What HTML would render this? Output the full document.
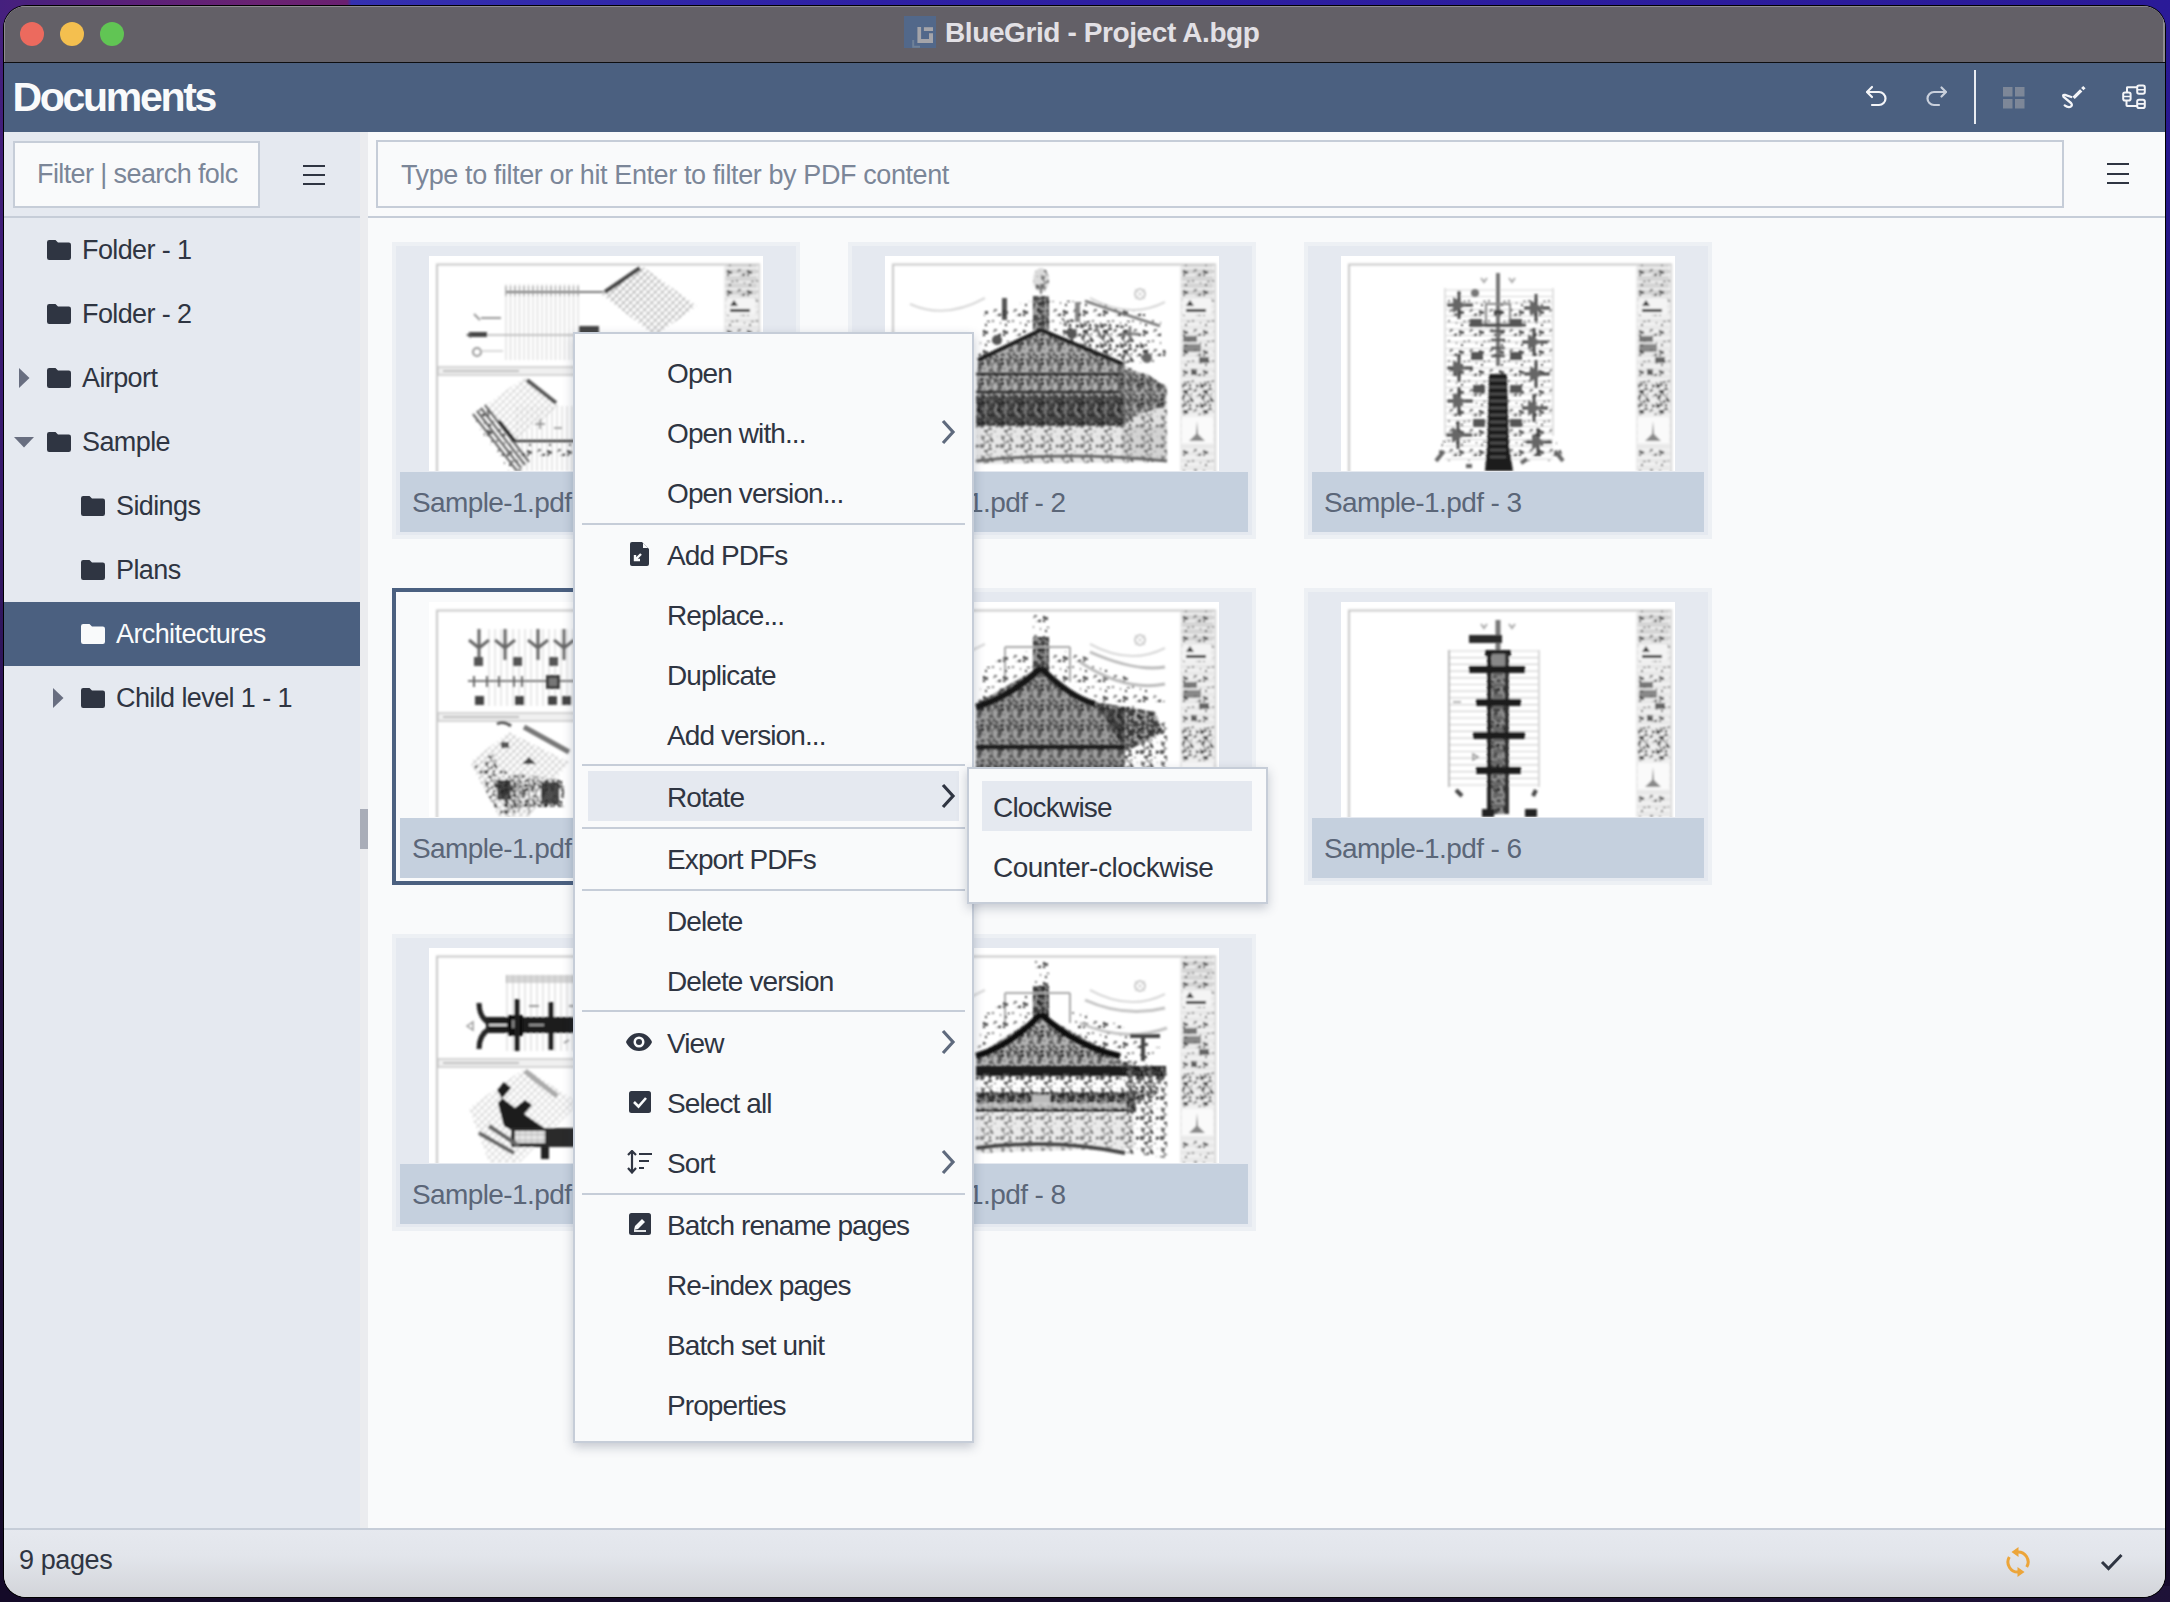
<!DOCTYPE html>
<html><head><meta charset="utf-8"><style>
*{box-sizing:border-box;margin:0;padding:0}
html,body{width:2170px;height:1602px;overflow:hidden}
body{font-family:"Liberation Sans",sans-serif;position:relative;background:#140a26}
.a{position:absolute}
.t{position:absolute;white-space:nowrap;line-height:1;color:#2f3542}
#win{position:absolute;left:0;top:0;width:2170px;height:1602px;clip-path:inset(6px 5px 5px 4px round 22px);background:#f9fafb}
.tl{position:absolute;top:22px;width:24px;height:24px;border-radius:50%}
</style></head><body>
<div class="a" style="left:0;top:0;width:2170px;height:40px;background:linear-gradient(90deg,#45207e 0%,#5a2078 6%,#6a2272 12%,#6a2070 16%,#3430b0 16.2%,#2e20a4 40%,#2a1a98 100%)"></div>
<div class="a" style="left:0;top:30px;width:8px;height:1572px;background:linear-gradient(180deg,#45207e 0%,#3a1a70 25%,#22103e 60%,#140a28 100%)"></div>
<div class="a" style="left:2158px;top:30px;width:12px;height:1572px;background:linear-gradient(180deg,#2a1a98 0%,#221270 30%,#1a0c40 70%,#160a2c 100%)"></div>
<div class="a" style="left:0;top:1586px;width:2170px;height:16px;background:linear-gradient(90deg,#140a28 0%,#140a28 60%,#1e1238 100%)"></div>
<div class="a" style="left:3px;top:5px;width:2163px;height:1593px;border-radius:23px;background:#000"></div>
<div id="win">
<div class="a" style="left:4px;top:6px;width:2161px;height:56px;background:#636067;border-top:1px solid #8d8b90;border-right:2px solid #8d8b90;border-left:1px solid #8d8b90"></div>
<div class="a" style="left:4px;top:62px;width:2161px;height:1px;background:#0e0e10"></div>
<div class="tl" style="left:20px;background:#ec6a5e"></div>
<div class="tl" style="left:60px;background:#f4bf4f"></div>
<div class="tl" style="left:100px;background:#61c554"></div>
<svg class="a" style="left:904px;top:16px" width="32" height="32" viewBox="0 0 32 32"><rect width="32" height="32" fill="#52688a"/><path d="M13.4 11.1 H17.1 V22.9 H25 V17.2 H29 V26.9 H13.4Z" fill="#a4a4a9"/><rect x="19.9" y="11.2" width="9.1" height="3.8" fill="#a4a4a9"/><path d="M9.2 24 V30.8 H16" stroke="#6f8198" stroke-width="2" fill="none"/></svg>
<div class="t" style="left:945px;top:18.80px;font-size:28px;color:#e2e0e5;font-weight:bold;letter-spacing:-0.4px;">BlueGrid - Project A.bgp</div>
<div class="a" style="left:4px;top:63px;width:2161px;height:69px;background:#4b6080"></div>
<div class="t" style="left:12.5px;top:77.29px;font-size:41px;color:#f9fafb;font-weight:bold;letter-spacing:-2.3px;">Documents</div>
<svg class="a" style="left:1860px;top:80px" width="34" height="34" viewBox="0 0 34 34"><path d="M12 7 L7 12 L12 17" stroke="#f4f5f8" stroke-width="2.2" fill="none" stroke-linecap="round" stroke-linejoin="round"/><path d="M7.5 12 H19 a6.5 6.5 0 0 1 0 13 H12" stroke="#f4f5f8" stroke-width="2.2" fill="none" stroke-linecap="round"/></svg>
<svg class="a" style="left:1919px;top:80px" width="34" height="34" viewBox="0 0 34 34"><path d="M22.5 7.5 L27 12 L22.5 16.5" stroke="#c9d0dc" stroke-width="2.2" fill="none" stroke-linecap="round" stroke-linejoin="round"/><path d="M26.5 12 H15 a6.5 6.5 0 0 0 0 13 H20" stroke="#c9d0dc" stroke-width="2.2" fill="none" stroke-linecap="round"/></svg>
<div class="a" style="left:1974px;top:70px;width:2px;height:54px;background:#e9ecf1"></div>
<svg class="a" style="left:2003px;top:87px" width="22" height="22" viewBox="0 0 22 22"><rect x="0" y="0" width="9.5" height="9.5" fill="#7d8798"/><rect x="12" y="0" width="9.5" height="9.5" fill="#7d8798"/><rect x="0" y="12" width="9.5" height="9.5" fill="#7d8798"/><rect x="12" y="12" width="9.5" height="9.5" fill="#7d8798"/></svg>
<svg class="a" style="left:2060px;top:84px" width="28" height="28" viewBox="0 0 28 28" fill="none" stroke="#f4f5f8"><path d="M13.6 13.9 L21.2 6.3" stroke-width="3.3"/><path d="M22.3 5.2 L24.4 3.1" stroke-width="3.3"/><path d="M11.3 13 L5 10.9 Q2.2 10.3 3.6 12.9 L11 19 Q13.2 21.6 10 23 Q7.5 23.6 4.7 21.4" stroke-width="2.3" stroke-linecap="round" stroke-linejoin="round"/></svg>
<svg class="a" style="left:2120px;top:83px" width="28" height="28" viewBox="0 0 28 28" fill="none" stroke="#f4f5f8" stroke-width="2"><rect x="3.2" y="9.5" width="7.4" height="8.1" rx="1.8"/><rect x="17.2" y="2.6" width="7.6" height="8.2" rx="1.8"/><rect x="17.2" y="16.8" width="7.6" height="8.2" rx="1.8"/><path d="M3.2 13.55 H10.6 M17.2 6.7 H24.8 M17.2 20.9 H24.8" stroke-width="1.6"/><path d="M7 9.5 V4.6 Q7 4.2 7.6 4.2 H17.2 M6.5 17.6 V22.3 Q6.5 22.9 7.2 22.9 H17.2"/></svg>
<div class="a" style="left:4px;top:132px;width:356px;height:1396px;background:#e5e9f0"></div>
<div class="a" style="left:360px;top:132px;width:8px;height:1396px;background:#ebecef"></div>
<div class="a" style="left:360px;top:809px;width:8px;height:40px;background:#a9adb8"></div>
<div class="a" style="left:13px;top:141px;width:247px;height:67px;background:#f9fafb;border:2px solid #c6cdd8"></div>
<div class="t" style="left:37px;top:161.14px;font-size:27px;color:#7b8698;letter-spacing:-0.6px;">Filter | search folc</div>
<div class="a" style="left:303px;top:165px;width:22px;height:2.4px;background:#2f3542"></div>
<div class="a" style="left:303px;top:174px;width:22px;height:2.4px;background:#2f3542"></div>
<div class="a" style="left:303px;top:183px;width:22px;height:2.4px;background:#2f3542"></div>
<div class="a" style="left:4px;top:216px;width:356px;height:2px;background:#c6cdd8"></div>
<div class="a" style="left:376px;top:140px;width:1688px;height:68px;background:#f9fafb;border:2px solid #c6cdd8"></div>
<div class="t" style="left:401px;top:162.14px;font-size:27px;color:#7b8698;letter-spacing:-0.4px;">Type to filter or hit Enter to filter by PDF content</div>
<div class="a" style="left:2107px;top:163px;width:22px;height:2.4px;background:#2f3542"></div>
<div class="a" style="left:2107px;top:172.5px;width:22px;height:2.4px;background:#2f3542"></div>
<div class="a" style="left:2107px;top:182px;width:22px;height:2.4px;background:#2f3542"></div>
<div class="a" style="left:368px;top:216px;width:1797px;height:2px;background:#c6cdd8"></div>
<div class="a" style="left:4px;top:602px;width:356px;height:64px;background:#4b6080"></div>
<svg class="a" style="left:47px;top:240px" width="24" height="20" viewBox="0 0 24 20"><path d="M0 2.2 Q0 0 2.2 0 H8.5 L11 2.5 H21.8 Q24 2.5 24 4.7 V17.8 Q24 20 21.8 20 H2.2 Q0 20 0 17.8Z" fill="#2f3542"/></svg>
<div class="t" style="left:82px;top:237.14px;font-size:27px;color:#2f3542;letter-spacing:-0.6px;">Folder - 1</div>
<svg class="a" style="left:47px;top:304px" width="24" height="20" viewBox="0 0 24 20"><path d="M0 2.2 Q0 0 2.2 0 H8.5 L11 2.5 H21.8 Q24 2.5 24 4.7 V17.8 Q24 20 21.8 20 H2.2 Q0 20 0 17.8Z" fill="#2f3542"/></svg>
<div class="t" style="left:82px;top:301.14px;font-size:27px;color:#2f3542;letter-spacing:-0.6px;">Folder - 2</div>
<svg class="a" style="left:47px;top:368px" width="24" height="20" viewBox="0 0 24 20"><path d="M0 2.2 Q0 0 2.2 0 H8.5 L11 2.5 H21.8 Q24 2.5 24 4.7 V17.8 Q24 20 21.8 20 H2.2 Q0 20 0 17.8Z" fill="#2f3542"/></svg>
<div class="t" style="left:82px;top:365.14px;font-size:27px;color:#2f3542;letter-spacing:-0.6px;">Airport</div>
<svg class="a" style="left:19px;top:368px" width="11" height="20" viewBox="0 0 11 20"><path d="M0 0 L10.5 10 L0 20Z" fill="#686e80"/></svg>
<svg class="a" style="left:47px;top:432px" width="24" height="20" viewBox="0 0 24 20"><path d="M0 2.2 Q0 0 2.2 0 H8.5 L11 2.5 H21.8 Q24 2.5 24 4.7 V17.8 Q24 20 21.8 20 H2.2 Q0 20 0 17.8Z" fill="#2f3542"/></svg>
<div class="t" style="left:82px;top:429.14px;font-size:27px;color:#2f3542;letter-spacing:-0.6px;">Sample</div>
<svg class="a" style="left:14px;top:437px" width="20" height="11" viewBox="0 0 20 11"><path d="M0 0 H20 L10 10.5Z" fill="#686e80"/></svg>
<svg class="a" style="left:81px;top:496px" width="24" height="20" viewBox="0 0 24 20"><path d="M0 2.2 Q0 0 2.2 0 H8.5 L11 2.5 H21.8 Q24 2.5 24 4.7 V17.8 Q24 20 21.8 20 H2.2 Q0 20 0 17.8Z" fill="#2f3542"/></svg>
<div class="t" style="left:116px;top:493.14px;font-size:27px;color:#2f3542;letter-spacing:-0.6px;">Sidings</div>
<svg class="a" style="left:81px;top:560px" width="24" height="20" viewBox="0 0 24 20"><path d="M0 2.2 Q0 0 2.2 0 H8.5 L11 2.5 H21.8 Q24 2.5 24 4.7 V17.8 Q24 20 21.8 20 H2.2 Q0 20 0 17.8Z" fill="#2f3542"/></svg>
<div class="t" style="left:116px;top:557.14px;font-size:27px;color:#2f3542;letter-spacing:-0.6px;">Plans</div>
<svg class="a" style="left:81px;top:624px" width="24" height="20" viewBox="0 0 24 20"><path d="M0 2.2 Q0 0 2.2 0 H8.5 L11 2.5 H21.8 Q24 2.5 24 4.7 V17.8 Q24 20 21.8 20 H2.2 Q0 20 0 17.8Z" fill="#f9fafb"/></svg>
<div class="t" style="left:116px;top:621.14px;font-size:27px;color:#f9fafb;letter-spacing:-0.6px;">Architectures</div>
<svg class="a" style="left:81px;top:688px" width="24" height="20" viewBox="0 0 24 20"><path d="M0 2.2 Q0 0 2.2 0 H8.5 L11 2.5 H21.8 Q24 2.5 24 4.7 V17.8 Q24 20 21.8 20 H2.2 Q0 20 0 17.8Z" fill="#2f3542"/></svg>
<div class="t" style="left:116px;top:685.14px;font-size:27px;color:#2f3542;letter-spacing:-0.6px;">Child level 1 - 1</div>
<svg class="a" style="left:53px;top:688px" width="11" height="20" viewBox="0 0 11 20"><path d="M0 0 L10.5 10 L0 20Z" fill="#686e80"/></svg>
<svg width="0" height="0" style="position:absolute"><defs><pattern id="n1" width="20" height="20" patternUnits="userSpaceOnUse"><rect x="11" y="19" width="1" height="3" fill="#777"/><rect x="0" y="15" width="3" height="3" fill="#555"/><rect x="15" y="17" width="1" height="3" fill="#777"/><rect x="7" y="4" width="2" height="2" fill="#777"/><rect x="2" y="5" width="3" height="1" fill="#1e1e1e"/><rect x="8" y="15" width="2" height="1" fill="#777"/><rect x="18" y="14" width="2" height="3" fill="#333"/><rect x="15" y="6" width="1" height="2" fill="#555"/><rect x="9" y="13" width="3" height="2" fill="#777"/><rect x="13" y="18" width="3" height="2" fill="#333"/><rect x="0" y="8" width="2" height="2" fill="#333"/><rect x="18" y="18" width="3" height="2" fill="#1e1e1e"/></pattern><pattern id="n2" width="20" height="20" patternUnits="userSpaceOnUse"><rect x="16" y="0" width="3" height="3" fill="#777"/><rect x="5" y="3" width="2" height="2" fill="#555"/><rect x="3" y="18" width="1" height="4" fill="#333"/><rect x="8" y="5" width="1" height="1" fill="#777"/><rect x="19" y="14" width="1" height="2" fill="#333"/><rect x="0" y="6" width="2" height="1" fill="#333"/><rect x="6" y="17" width="1" height="2" fill="#333"/><rect x="12" y="9" width="2" height="2" fill="#1e1e1e"/><rect x="4" y="8" width="2" height="3" fill="#1e1e1e"/><rect x="18" y="0" width="3" height="2" fill="#555"/><rect x="9" y="15" width="2" height="1" fill="#555"/><rect x="5" y="1" width="2" height="2" fill="#555"/><rect x="12" y="0" width="1" height="1" fill="#777"/><rect x="0" y="14" width="3" height="2" fill="#1e1e1e"/><rect x="6" y="3" width="2" height="3" fill="#333"/><rect x="16" y="8" width="4" height="2" fill="#777"/><rect x="11" y="9" width="1" height="3" fill="#1e1e1e"/><rect x="16" y="19" width="1" height="4" fill="#555"/><rect x="17" y="2" width="2" height="2" fill="#555"/><rect x="2" y="4" width="2" height="3" fill="#555"/><rect x="2" y="19" width="4" height="1" fill="#777"/><rect x="11" y="8" width="1" height="1" fill="#777"/><rect x="1" y="15" width="1" height="4" fill="#555"/><rect x="18" y="4" width="2" height="1" fill="#777"/><rect x="4" y="1" width="1" height="1" fill="#777"/><rect x="19" y="5" width="1" height="3" fill="#777"/><rect x="15" y="8" width="4" height="4" fill="#555"/><rect x="3" y="12" width="4" height="2" fill="#333"/><rect x="15" y="8" width="2" height="4" fill="#555"/></pattern><pattern id="n3" width="20" height="20" patternUnits="userSpaceOnUse"><rect x="1" y="2" width="1" height="3" fill="#1e1e1e"/><rect x="16" y="6" width="3" height="3" fill="#1e1e1e"/><rect x="7" y="2" width="2" height="1" fill="#777"/><rect x="7" y="18" width="3" height="1" fill="#1e1e1e"/><rect x="1" y="17" width="4" height="1" fill="#333"/><rect x="3" y="18" width="2" height="3" fill="#555"/><rect x="6" y="11" width="2" height="1" fill="#1e1e1e"/><rect x="6" y="15" width="3" height="1" fill="#777"/><rect x="14" y="11" width="3" height="2" fill="#555"/><rect x="7" y="2" width="2" height="1" fill="#555"/><rect x="9" y="19" width="4" height="2" fill="#1e1e1e"/><rect x="10" y="4" width="3" height="1" fill="#777"/><rect x="2" y="17" width="4" height="1" fill="#555"/><rect x="15" y="18" width="3" height="3" fill="#777"/><rect x="15" y="2" width="1" height="1" fill="#1e1e1e"/><rect x="14" y="9" width="3" height="3" fill="#777"/><rect x="11" y="5" width="3" height="1" fill="#1e1e1e"/><rect x="9" y="4" width="1" height="4" fill="#333"/><rect x="15" y="2" width="4" height="2" fill="#333"/><rect x="4" y="13" width="4" height="2" fill="#555"/><rect x="12" y="7" width="4" height="2" fill="#333"/><rect x="7" y="0" width="1" height="1" fill="#777"/><rect x="4" y="13" width="2" height="2" fill="#555"/><rect x="16" y="19" width="3" height="1" fill="#1e1e1e"/><rect x="12" y="12" width="4" height="4" fill="#777"/><rect x="12" y="1" width="1" height="4" fill="#333"/><rect x="3" y="10" width="1" height="1" fill="#1e1e1e"/><rect x="17" y="3" width="1" height="1" fill="#555"/><rect x="19" y="12" width="1" height="1" fill="#333"/><rect x="15" y="3" width="3" height="2" fill="#1e1e1e"/><rect x="9" y="2" width="2" height="4" fill="#333"/><rect x="8" y="15" width="1" height="1" fill="#333"/><rect x="16" y="11" width="1" height="1" fill="#333"/><rect x="2" y="8" width="3" height="1" fill="#555"/><rect x="17" y="17" width="2" height="2" fill="#555"/><rect x="6" y="7" width="2" height="3" fill="#777"/><rect x="11" y="0" width="2" height="1" fill="#1e1e1e"/><rect x="19" y="11" width="2" height="3" fill="#777"/><rect x="3" y="7" width="2" height="3" fill="#777"/><rect x="19" y="19" width="2" height="2" fill="#1e1e1e"/><rect x="2" y="3" width="4" height="4" fill="#777"/><rect x="13" y="10" width="2" height="2" fill="#1e1e1e"/><rect x="2" y="5" width="2" height="4" fill="#333"/><rect x="14" y="4" width="1" height="2" fill="#777"/><rect x="4" y="0" width="3" height="1" fill="#1e1e1e"/><rect x="4" y="13" width="1" height="3" fill="#333"/><rect x="9" y="16" width="1" height="2" fill="#333"/><rect x="4" y="1" width="3" height="2" fill="#555"/></pattern><pattern id="n4" width="20" height="20" patternUnits="userSpaceOnUse"><rect x="14" y="14" width="4" height="3" fill="#333"/><rect x="19" y="5" width="3" height="2" fill="#1e1e1e"/><rect x="17" y="1" width="2" height="4" fill="#777"/><rect x="5" y="19" width="4" height="4" fill="#1e1e1e"/><rect x="6" y="7" width="1" height="5" fill="#1e1e1e"/><rect x="6" y="16" width="2" height="4" fill="#333"/><rect x="2" y="14" width="2" height="3" fill="#555"/><rect x="2" y="8" width="4" height="3" fill="#555"/><rect x="2" y="18" width="3" height="2" fill="#1e1e1e"/><rect x="12" y="2" width="4" height="1" fill="#1e1e1e"/><rect x="1" y="15" width="1" height="1" fill="#777"/><rect x="6" y="8" width="2" height="4" fill="#555"/><rect x="13" y="3" width="2" height="1" fill="#333"/><rect x="1" y="14" width="2" height="2" fill="#777"/><rect x="14" y="16" width="2" height="2" fill="#333"/><rect x="3" y="12" width="2" height="2" fill="#777"/><rect x="18" y="9" width="1" height="2" fill="#1e1e1e"/><rect x="19" y="18" width="1" height="2" fill="#1e1e1e"/><rect x="8" y="0" width="1" height="1" fill="#555"/><rect x="2" y="6" width="2" height="3" fill="#333"/><rect x="19" y="14" width="3" height="1" fill="#333"/><rect x="4" y="12" width="5" height="2" fill="#333"/><rect x="19" y="7" width="2" height="2" fill="#333"/><rect x="17" y="6" width="2" height="2" fill="#777"/><rect x="1" y="3" width="3" height="4" fill="#1e1e1e"/><rect x="7" y="12" width="1" height="3" fill="#555"/><rect x="16" y="5" width="3" height="4" fill="#1e1e1e"/><rect x="19" y="19" width="1" height="2" fill="#1e1e1e"/><rect x="6" y="0" width="3" height="1" fill="#1e1e1e"/><rect x="1" y="1" width="2" height="3" fill="#333"/><rect x="4" y="2" width="3" height="2" fill="#555"/><rect x="16" y="18" width="2" height="2" fill="#333"/><rect x="15" y="11" width="5" height="1" fill="#555"/><rect x="2" y="15" width="1" height="1" fill="#1e1e1e"/><rect x="2" y="2" width="2" height="3" fill="#777"/><rect x="4" y="10" width="5" height="2" fill="#555"/><rect x="2" y="13" width="1" height="1" fill="#1e1e1e"/><rect x="12" y="12" width="3" height="4" fill="#1e1e1e"/><rect x="3" y="8" width="1" height="5" fill="#777"/><rect x="18" y="14" width="3" height="2" fill="#777"/><rect x="16" y="0" width="3" height="4" fill="#555"/><rect x="7" y="3" width="1" height="5" fill="#777"/><rect x="8" y="0" width="5" height="5" fill="#555"/><rect x="6" y="16" width="3" height="1" fill="#333"/><rect x="15" y="7" width="3" height="3" fill="#555"/><rect x="13" y="6" width="4" height="4" fill="#333"/><rect x="10" y="6" width="4" height="1" fill="#333"/><rect x="1" y="2" width="2" height="2" fill="#555"/><rect x="8" y="6" width="1" height="2" fill="#777"/><rect x="10" y="19" width="4" height="4" fill="#777"/><rect x="8" y="19" width="3" height="1" fill="#1e1e1e"/><rect x="18" y="0" width="3" height="3" fill="#333"/><rect x="8" y="7" width="2" height="4" fill="#333"/><rect x="3" y="17" width="1" height="1" fill="#555"/><rect x="15" y="8" width="1" height="1" fill="#333"/></pattern><pattern id="hatch" width="5" height="5" patternUnits="userSpaceOnUse" patternTransform="rotate(45)"><rect width="5" height="5" fill="#fff"/><line x1="0" y1="0" x2="0" y2="5" stroke="#8a8a8a" stroke-width="1.6"/><line x1="0" y1="0" x2="5" y2="0" stroke="#9a9a9a" stroke-width="1.2"/></pattern><pattern id="hatchd" width="5" height="5" patternUnits="userSpaceOnUse" patternTransform="rotate(45)"><rect width="5" height="5" fill="#9a9a9a"/><line x1="0" y1="0" x2="0" y2="5" stroke="#3a3a3a" stroke-width="2"/><line x1="0" y1="0" x2="5" y2="0" stroke="#444" stroke-width="2"/></pattern><pattern id="grid" width="6" height="6" patternUnits="userSpaceOnUse"><rect width="6" height="6" fill="#8a8a8a"/><line x1="0" y1="0" x2="6" y2="0" stroke="#2e2e2e" stroke-width="2"/><line x1="0" y1="0" x2="0" y2="6" stroke="#555" stroke-width="1.5"/></pattern><pattern id="gridl" width="6" height="6" patternUnits="userSpaceOnUse"><rect width="6" height="6" fill="#e4e4e4"/><line x1="0" y1="0" x2="6" y2="0" stroke="#999" stroke-width="1.4"/><line x1="0" y1="0" x2="0" y2="6" stroke="#aaa" stroke-width="1"/></pattern><filter id="bl" x="-2%" y="-2%" width="104%" height="104%"><feGaussianBlur stdDeviation="0.85"/></filter><symbol id="thA1" viewBox="0 0 334 215"><g filter="url(#bl)"><rect x="8" y="8.5" width="322" height="215" fill="none" stroke="#c9c9c9" stroke-width="2"/><rect x="295" y="9" width="35" height="206" fill="#e9e9e9"/><rect x="297" y="9" width="31" height="36" fill="#d0d0d0" opacity=".8"/><line x1="296" y1="12" x2="329" y2="12" stroke="#f7f7f7" stroke-width="1.5"/><line x1="296" y1="19" x2="329" y2="19" stroke="#f7f7f7" stroke-width="1.5"/><line x1="296" y1="26" x2="329" y2="26" stroke="#f7f7f7" stroke-width="1.5"/><line x1="296" y1="33" x2="329" y2="33" stroke="#f7f7f7" stroke-width="1.5"/><line x1="296" y1="40" x2="329" y2="40" stroke="#f7f7f7" stroke-width="1.5"/><line x1="296" y1="47" x2="329" y2="47" stroke="#f7f7f7" stroke-width="1.5"/><line x1="296" y1="54" x2="329" y2="54" stroke="#f7f7f7" stroke-width="1.5"/><line x1="296" y1="61" x2="329" y2="61" stroke="#f7f7f7" stroke-width="1.5"/><line x1="296" y1="68" x2="329" y2="68" stroke="#f7f7f7" stroke-width="1.5"/><line x1="296" y1="75" x2="329" y2="75" stroke="#f7f7f7" stroke-width="1.5"/><line x1="296" y1="82" x2="329" y2="82" stroke="#f7f7f7" stroke-width="1.5"/><line x1="296" y1="89" x2="329" y2="89" stroke="#f7f7f7" stroke-width="1.5"/><line x1="296" y1="96" x2="329" y2="96" stroke="#f7f7f7" stroke-width="1.5"/><line x1="296" y1="103" x2="329" y2="103" stroke="#f7f7f7" stroke-width="1.5"/><line x1="296" y1="110" x2="329" y2="110" stroke="#f7f7f7" stroke-width="1.5"/><line x1="296" y1="117" x2="329" y2="117" stroke="#f7f7f7" stroke-width="1.5"/><line x1="296" y1="124" x2="329" y2="124" stroke="#f7f7f7" stroke-width="1.5"/><line x1="296" y1="131" x2="329" y2="131" stroke="#f7f7f7" stroke-width="1.5"/><line x1="296" y1="138" x2="329" y2="138" stroke="#f7f7f7" stroke-width="1.5"/><line x1="296" y1="145" x2="329" y2="145" stroke="#f7f7f7" stroke-width="1.5"/><line x1="296" y1="152" x2="329" y2="152" stroke="#f7f7f7" stroke-width="1.5"/><line x1="296" y1="159" x2="329" y2="159" stroke="#f7f7f7" stroke-width="1.5"/><line x1="296" y1="166" x2="329" y2="166" stroke="#f7f7f7" stroke-width="1.5"/><line x1="296" y1="173" x2="329" y2="173" stroke="#f7f7f7" stroke-width="1.5"/><line x1="296" y1="180" x2="329" y2="180" stroke="#f7f7f7" stroke-width="1.5"/><line x1="296" y1="187" x2="329" y2="187" stroke="#f7f7f7" stroke-width="1.5"/><line x1="296" y1="194" x2="329" y2="194" stroke="#f7f7f7" stroke-width="1.5"/><line x1="296" y1="201" x2="329" y2="201" stroke="#f7f7f7" stroke-width="1.5"/><line x1="296" y1="208" x2="329" y2="208" stroke="#f7f7f7" stroke-width="1.5"/><rect x="298" y="80" width="14" height="6" fill="#777"/><rect x="298" y="88" width="18" height="8" fill="#888"/><rect x="314" y="101" width="10" height="6" fill="#666"/><rect x="306" y="113" width="6" height="6" fill="#555"/><rect x="296" y="9" width="33" height="150" fill="url(#n1)"/><rect x="297" y="125" width="31" height="30" fill="url(#n2)"/><rect x="297" y="161" width="31" height="26" fill="#fafafa"/><path d="M304 185 L311 178 L312 165 L313 178 L320 185Z" fill="#888"/><rect x="297" y="190" width="31" height="25" fill="url(#n1)"/><rect x="298" y="42" width="28" height="17" fill="#f4f4f4"/><path d="M301 50 L305 44 L309 50Z" fill="#333"/><rect x="301" y="53" width="20" height="3" fill="#1e1e1e"/><rect x="9" y="111" width="320" height="8" fill="#f0f0f0" stroke="#c8c8c8" stroke-width="1.5"/><line x1="14" y1="115" x2="90" y2="115" stroke="#bbb" stroke-width="2"/><line x1="77" y1="28" x2="77" y2="104" stroke="#d0d0d0" stroke-width="1"/><line x1="81.5" y1="28" x2="81.5" y2="104" stroke="#d0d0d0" stroke-width="1"/><line x1="86.0" y1="28" x2="86.0" y2="104" stroke="#d0d0d0" stroke-width="1"/><line x1="90.5" y1="28" x2="90.5" y2="104" stroke="#d0d0d0" stroke-width="1"/><line x1="95.0" y1="28" x2="95.0" y2="104" stroke="#d0d0d0" stroke-width="1"/><line x1="99.5" y1="28" x2="99.5" y2="104" stroke="#d0d0d0" stroke-width="1"/><line x1="104.0" y1="28" x2="104.0" y2="104" stroke="#d0d0d0" stroke-width="1"/><line x1="108.5" y1="28" x2="108.5" y2="104" stroke="#d0d0d0" stroke-width="1"/><line x1="113.0" y1="28" x2="113.0" y2="104" stroke="#d0d0d0" stroke-width="1"/><line x1="117.5" y1="28" x2="117.5" y2="104" stroke="#d0d0d0" stroke-width="1"/><line x1="122.0" y1="28" x2="122.0" y2="104" stroke="#d0d0d0" stroke-width="1"/><line x1="126.5" y1="28" x2="126.5" y2="104" stroke="#d0d0d0" stroke-width="1"/><line x1="131.0" y1="28" x2="131.0" y2="104" stroke="#d0d0d0" stroke-width="1"/><line x1="135.5" y1="28" x2="135.5" y2="104" stroke="#d0d0d0" stroke-width="1"/><line x1="140.0" y1="28" x2="140.0" y2="104" stroke="#d0d0d0" stroke-width="1"/><line x1="144.5" y1="28" x2="144.5" y2="104" stroke="#d0d0d0" stroke-width="1"/><line x1="149.0" y1="28" x2="149.0" y2="104" stroke="#d0d0d0" stroke-width="1"/><line x1="77" y1="36" x2="185" y2="36" stroke="#777" stroke-width="2"/><line x1="77" y1="30" x2="77" y2="40" stroke="#999" stroke-width="1.2"/><line x1="81.5" y1="30" x2="81.5" y2="40" stroke="#999" stroke-width="1.2"/><line x1="86.0" y1="30" x2="86.0" y2="40" stroke="#999" stroke-width="1.2"/><line x1="90.5" y1="30" x2="90.5" y2="40" stroke="#999" stroke-width="1.2"/><line x1="95.0" y1="30" x2="95.0" y2="40" stroke="#999" stroke-width="1.2"/><line x1="99.5" y1="30" x2="99.5" y2="40" stroke="#999" stroke-width="1.2"/><line x1="104.0" y1="30" x2="104.0" y2="40" stroke="#999" stroke-width="1.2"/><line x1="108.5" y1="30" x2="108.5" y2="40" stroke="#999" stroke-width="1.2"/><line x1="113.0" y1="30" x2="113.0" y2="40" stroke="#999" stroke-width="1.2"/><line x1="117.5" y1="30" x2="117.5" y2="40" stroke="#999" stroke-width="1.2"/><line x1="122.0" y1="30" x2="122.0" y2="40" stroke="#999" stroke-width="1.2"/><line x1="126.5" y1="30" x2="126.5" y2="40" stroke="#999" stroke-width="1.2"/><line x1="131.0" y1="30" x2="131.0" y2="40" stroke="#999" stroke-width="1.2"/><line x1="135.5" y1="30" x2="135.5" y2="40" stroke="#999" stroke-width="1.2"/><line x1="140.0" y1="30" x2="140.0" y2="40" stroke="#999" stroke-width="1.2"/><line x1="144.5" y1="30" x2="144.5" y2="40" stroke="#999" stroke-width="1.2"/><line x1="149.0" y1="30" x2="149.0" y2="40" stroke="#999" stroke-width="1.2"/><polygon points="172,38 213,10 268,50 226,80" fill="url(#hatch)"/><line x1="176" y1="36" x2="211" y2="12" stroke="#444" stroke-width="4"/><rect x="150" y="70" width="20" height="8" fill="#444"/><line x1="39" y1="79" x2="160" y2="79" stroke="#b5b5b5" stroke-width="1.5"/><rect x="40" y="76" width="18" height="5" fill="#444"/><path d="M37 79 l5 -3 v6z" fill="#555"/><path d="M45 58 l6 6 M52 62 h20" stroke="#999" stroke-width="2"/><circle cx="48" cy="96" r="4" fill="none" stroke="#999" stroke-width="2"/><path d="M52 95 h22" stroke="#ccc" stroke-width="1.5"/><line x1="88" y1="150" x2="88" y2="215" stroke="#cfcfcf" stroke-width="1"/><line x1="93" y1="150" x2="93" y2="215" stroke="#cfcfcf" stroke-width="1"/><line x1="98" y1="150" x2="98" y2="215" stroke="#cfcfcf" stroke-width="1"/><line x1="103" y1="150" x2="103" y2="215" stroke="#cfcfcf" stroke-width="1"/><line x1="108" y1="150" x2="108" y2="215" stroke="#cfcfcf" stroke-width="1"/><line x1="113" y1="150" x2="113" y2="215" stroke="#cfcfcf" stroke-width="1"/><line x1="118" y1="150" x2="118" y2="215" stroke="#cfcfcf" stroke-width="1"/><line x1="123" y1="150" x2="123" y2="215" stroke="#cfcfcf" stroke-width="1"/><line x1="128" y1="150" x2="128" y2="215" stroke="#cfcfcf" stroke-width="1"/><line x1="133" y1="150" x2="133" y2="215" stroke="#cfcfcf" stroke-width="1"/><line x1="138" y1="150" x2="138" y2="215" stroke="#cfcfcf" stroke-width="1"/><line x1="143" y1="150" x2="143" y2="215" stroke="#cfcfcf" stroke-width="1"/><line x1="148" y1="150" x2="148" y2="215" stroke="#cfcfcf" stroke-width="1"/><polygon points="55,150 96,121 130,150 86,185" fill="url(#hatch)" opacity=".55"/><polygon points="42,160 55,150 100,205 95,215 80,215" fill="url(#n1)"/><line x1="44" y1="158" x2="88" y2="215" stroke="#666" stroke-width="2.2"/><line x1="48" y1="155" x2="92" y2="212" stroke="#666" stroke-width="2.2"/><line x1="52" y1="152" x2="96" y2="209" stroke="#666" stroke-width="2.2"/><line x1="56" y1="149" x2="100" y2="206" stroke="#666" stroke-width="2.2"/><line x1="70" y1="165" x2="86" y2="185" stroke="#222" stroke-width="3"/><polygon points="86,188 150,188 150,200 92,200" fill="url(#n1)"/><line x1="98" y1="124" x2="127" y2="147" stroke="#555" stroke-width="4"/><line x1="86" y1="185" x2="190" y2="185" stroke="#333" stroke-width="2.5"/><path d="M106 168 h10 M111 163 v10 M125 172 h8" stroke="#888" stroke-width="1.5"/></g></symbol><symbol id="thA4" viewBox="0 0 334 215"><g filter="url(#bl)"><rect x="8" y="8.5" width="322" height="215" fill="none" stroke="#c9c9c9" stroke-width="2"/><rect x="295" y="9" width="35" height="206" fill="#e9e9e9"/><rect x="297" y="9" width="31" height="36" fill="#d0d0d0" opacity=".8"/><line x1="296" y1="12" x2="329" y2="12" stroke="#f7f7f7" stroke-width="1.5"/><line x1="296" y1="19" x2="329" y2="19" stroke="#f7f7f7" stroke-width="1.5"/><line x1="296" y1="26" x2="329" y2="26" stroke="#f7f7f7" stroke-width="1.5"/><line x1="296" y1="33" x2="329" y2="33" stroke="#f7f7f7" stroke-width="1.5"/><line x1="296" y1="40" x2="329" y2="40" stroke="#f7f7f7" stroke-width="1.5"/><line x1="296" y1="47" x2="329" y2="47" stroke="#f7f7f7" stroke-width="1.5"/><line x1="296" y1="54" x2="329" y2="54" stroke="#f7f7f7" stroke-width="1.5"/><line x1="296" y1="61" x2="329" y2="61" stroke="#f7f7f7" stroke-width="1.5"/><line x1="296" y1="68" x2="329" y2="68" stroke="#f7f7f7" stroke-width="1.5"/><line x1="296" y1="75" x2="329" y2="75" stroke="#f7f7f7" stroke-width="1.5"/><line x1="296" y1="82" x2="329" y2="82" stroke="#f7f7f7" stroke-width="1.5"/><line x1="296" y1="89" x2="329" y2="89" stroke="#f7f7f7" stroke-width="1.5"/><line x1="296" y1="96" x2="329" y2="96" stroke="#f7f7f7" stroke-width="1.5"/><line x1="296" y1="103" x2="329" y2="103" stroke="#f7f7f7" stroke-width="1.5"/><line x1="296" y1="110" x2="329" y2="110" stroke="#f7f7f7" stroke-width="1.5"/><line x1="296" y1="117" x2="329" y2="117" stroke="#f7f7f7" stroke-width="1.5"/><line x1="296" y1="124" x2="329" y2="124" stroke="#f7f7f7" stroke-width="1.5"/><line x1="296" y1="131" x2="329" y2="131" stroke="#f7f7f7" stroke-width="1.5"/><line x1="296" y1="138" x2="329" y2="138" stroke="#f7f7f7" stroke-width="1.5"/><line x1="296" y1="145" x2="329" y2="145" stroke="#f7f7f7" stroke-width="1.5"/><line x1="296" y1="152" x2="329" y2="152" stroke="#f7f7f7" stroke-width="1.5"/><line x1="296" y1="159" x2="329" y2="159" stroke="#f7f7f7" stroke-width="1.5"/><line x1="296" y1="166" x2="329" y2="166" stroke="#f7f7f7" stroke-width="1.5"/><line x1="296" y1="173" x2="329" y2="173" stroke="#f7f7f7" stroke-width="1.5"/><line x1="296" y1="180" x2="329" y2="180" stroke="#f7f7f7" stroke-width="1.5"/><line x1="296" y1="187" x2="329" y2="187" stroke="#f7f7f7" stroke-width="1.5"/><line x1="296" y1="194" x2="329" y2="194" stroke="#f7f7f7" stroke-width="1.5"/><line x1="296" y1="201" x2="329" y2="201" stroke="#f7f7f7" stroke-width="1.5"/><line x1="296" y1="208" x2="329" y2="208" stroke="#f7f7f7" stroke-width="1.5"/><rect x="298" y="80" width="14" height="6" fill="#777"/><rect x="298" y="88" width="18" height="8" fill="#888"/><rect x="314" y="101" width="10" height="6" fill="#666"/><rect x="306" y="113" width="6" height="6" fill="#555"/><rect x="296" y="9" width="33" height="150" fill="url(#n1)"/><rect x="297" y="125" width="31" height="30" fill="url(#n2)"/><rect x="297" y="161" width="31" height="26" fill="#fafafa"/><path d="M304 185 L311 178 L312 165 L313 178 L320 185Z" fill="#888"/><rect x="297" y="190" width="31" height="25" fill="url(#n1)"/><rect x="298" y="42" width="28" height="17" fill="#f4f4f4"/><path d="M301 50 L305 44 L309 50Z" fill="#333"/><rect x="301" y="53" width="20" height="3" fill="#1e1e1e"/><rect x="9" y="111" width="320" height="8" fill="#f0f0f0" stroke="#c8c8c8" stroke-width="1.5"/><line x1="14" y1="115" x2="90" y2="115" stroke="#bbb" stroke-width="2"/><line x1="60" y1="27" x2="60" y2="104" stroke="#d0d0d0" stroke-width="1"/><line x1="66" y1="27" x2="66" y2="104" stroke="#d0d0d0" stroke-width="1"/><line x1="72" y1="27" x2="72" y2="104" stroke="#d0d0d0" stroke-width="1"/><line x1="78" y1="27" x2="78" y2="104" stroke="#d0d0d0" stroke-width="1"/><line x1="84" y1="27" x2="84" y2="104" stroke="#d0d0d0" stroke-width="1"/><line x1="90" y1="27" x2="90" y2="104" stroke="#d0d0d0" stroke-width="1"/><line x1="96" y1="27" x2="96" y2="104" stroke="#d0d0d0" stroke-width="1"/><line x1="102" y1="27" x2="102" y2="104" stroke="#d0d0d0" stroke-width="1"/><line x1="108" y1="27" x2="108" y2="104" stroke="#d0d0d0" stroke-width="1"/><line x1="114" y1="27" x2="114" y2="104" stroke="#d0d0d0" stroke-width="1"/><line x1="120" y1="27" x2="120" y2="104" stroke="#d0d0d0" stroke-width="1"/><line x1="126" y1="27" x2="126" y2="104" stroke="#d0d0d0" stroke-width="1"/><line x1="132" y1="27" x2="132" y2="104" stroke="#d0d0d0" stroke-width="1"/><line x1="138" y1="27" x2="138" y2="104" stroke="#d0d0d0" stroke-width="1"/><line x1="144" y1="27" x2="144" y2="104" stroke="#d0d0d0" stroke-width="1"/><line x1="150" y1="27" x2="150" y2="104" stroke="#d0d0d0" stroke-width="1"/><line x1="156" y1="27" x2="156" y2="104" stroke="#d0d0d0" stroke-width="1"/><line x1="162" y1="27" x2="162" y2="104" stroke="#d0d0d0" stroke-width="1"/><line x1="168" y1="27" x2="168" y2="104" stroke="#d0d0d0" stroke-width="1"/><path d="M40 38 L50 46 L60 38 M50 27 V58" stroke="#666" stroke-width="3" fill="none"/><path d="M66 38 L76 46 L86 38 M76 27 V58" stroke="#666" stroke-width="3" fill="none"/><path d="M99 38 L109 46 L119 38 M109 27 V58" stroke="#666" stroke-width="3" fill="none"/><path d="M125 38 L135 46 L145 38 M135 27 V58" stroke="#666" stroke-width="3" fill="none"/><rect x="45" y="55" width="9" height="9" fill="#555"/><rect x="84" y="55" width="9" height="9" fill="#555"/><rect x="120" y="55" width="9" height="9" fill="#555"/><line x1="39" y1="79" x2="175" y2="79" stroke="#777" stroke-width="2"/><line x1="45" y1="74" x2="45" y2="85" stroke="#666" stroke-width="2"/><line x1="58" y1="74" x2="58" y2="85" stroke="#666" stroke-width="2"/><line x1="70" y1="74" x2="70" y2="85" stroke="#666" stroke-width="2"/><line x1="85" y1="74" x2="85" y2="85" stroke="#666" stroke-width="2"/><line x1="93" y1="74" x2="93" y2="85" stroke="#666" stroke-width="2"/><rect x="117" y="73" width="14" height="14" fill="#3a3a3a"/><rect x="120" y="76" width="8" height="8" fill="#777"/><rect x="46" y="94" width="9" height="9" fill="#444"/><rect x="86" y="94" width="9" height="9" fill="#444"/><rect x="119" y="94" width="9" height="9" fill="#444"/><rect x="133" y="94" width="9" height="9" fill="#444"/><path d="M68 122 q6 -4 14 2" stroke="#555" stroke-width="3" fill="none"/><polygon points="41,160 80,130 140,160 100,215 70,215" fill="url(#hatch)" opacity=".7"/><polygon points="45,165 62,150 100,200 80,215 70,215" fill="url(#n2)"/><polygon points="65,178 90,172 135,178 135,205 75,205" fill="url(#n3)"/><rect x="68" y="178" width="14" height="20" fill="#2a2a2a" opacity=".8"/><rect x="112" y="180" width="18" height="22" fill="#333" opacity=".85"/><rect x="72" y="140" width="8" height="6" fill="#555"/><path d="M93 162 l7 -7 l7 7z" fill="#444"/><path d="M90 172 V210 M100 175 V212" stroke="#888" stroke-width="1.5"/><line x1="95" y1="125" x2="140" y2="150" stroke="#777" stroke-width="5"/></g></symbol><symbol id="thA7" viewBox="0 0 334 215"><g filter="url(#bl)"><rect x="8" y="8.5" width="322" height="215" fill="none" stroke="#c9c9c9" stroke-width="2"/><rect x="295" y="9" width="35" height="206" fill="#e9e9e9"/><rect x="297" y="9" width="31" height="36" fill="#d0d0d0" opacity=".8"/><line x1="296" y1="12" x2="329" y2="12" stroke="#f7f7f7" stroke-width="1.5"/><line x1="296" y1="19" x2="329" y2="19" stroke="#f7f7f7" stroke-width="1.5"/><line x1="296" y1="26" x2="329" y2="26" stroke="#f7f7f7" stroke-width="1.5"/><line x1="296" y1="33" x2="329" y2="33" stroke="#f7f7f7" stroke-width="1.5"/><line x1="296" y1="40" x2="329" y2="40" stroke="#f7f7f7" stroke-width="1.5"/><line x1="296" y1="47" x2="329" y2="47" stroke="#f7f7f7" stroke-width="1.5"/><line x1="296" y1="54" x2="329" y2="54" stroke="#f7f7f7" stroke-width="1.5"/><line x1="296" y1="61" x2="329" y2="61" stroke="#f7f7f7" stroke-width="1.5"/><line x1="296" y1="68" x2="329" y2="68" stroke="#f7f7f7" stroke-width="1.5"/><line x1="296" y1="75" x2="329" y2="75" stroke="#f7f7f7" stroke-width="1.5"/><line x1="296" y1="82" x2="329" y2="82" stroke="#f7f7f7" stroke-width="1.5"/><line x1="296" y1="89" x2="329" y2="89" stroke="#f7f7f7" stroke-width="1.5"/><line x1="296" y1="96" x2="329" y2="96" stroke="#f7f7f7" stroke-width="1.5"/><line x1="296" y1="103" x2="329" y2="103" stroke="#f7f7f7" stroke-width="1.5"/><line x1="296" y1="110" x2="329" y2="110" stroke="#f7f7f7" stroke-width="1.5"/><line x1="296" y1="117" x2="329" y2="117" stroke="#f7f7f7" stroke-width="1.5"/><line x1="296" y1="124" x2="329" y2="124" stroke="#f7f7f7" stroke-width="1.5"/><line x1="296" y1="131" x2="329" y2="131" stroke="#f7f7f7" stroke-width="1.5"/><line x1="296" y1="138" x2="329" y2="138" stroke="#f7f7f7" stroke-width="1.5"/><line x1="296" y1="145" x2="329" y2="145" stroke="#f7f7f7" stroke-width="1.5"/><line x1="296" y1="152" x2="329" y2="152" stroke="#f7f7f7" stroke-width="1.5"/><line x1="296" y1="159" x2="329" y2="159" stroke="#f7f7f7" stroke-width="1.5"/><line x1="296" y1="166" x2="329" y2="166" stroke="#f7f7f7" stroke-width="1.5"/><line x1="296" y1="173" x2="329" y2="173" stroke="#f7f7f7" stroke-width="1.5"/><line x1="296" y1="180" x2="329" y2="180" stroke="#f7f7f7" stroke-width="1.5"/><line x1="296" y1="187" x2="329" y2="187" stroke="#f7f7f7" stroke-width="1.5"/><line x1="296" y1="194" x2="329" y2="194" stroke="#f7f7f7" stroke-width="1.5"/><line x1="296" y1="201" x2="329" y2="201" stroke="#f7f7f7" stroke-width="1.5"/><line x1="296" y1="208" x2="329" y2="208" stroke="#f7f7f7" stroke-width="1.5"/><rect x="298" y="80" width="14" height="6" fill="#777"/><rect x="298" y="88" width="18" height="8" fill="#888"/><rect x="314" y="101" width="10" height="6" fill="#666"/><rect x="306" y="113" width="6" height="6" fill="#555"/><rect x="296" y="9" width="33" height="150" fill="url(#n1)"/><rect x="297" y="125" width="31" height="30" fill="url(#n2)"/><rect x="297" y="161" width="31" height="26" fill="#fafafa"/><path d="M304 185 L311 178 L312 165 L313 178 L320 185Z" fill="#888"/><rect x="297" y="190" width="31" height="25" fill="url(#n1)"/><rect x="298" y="42" width="28" height="17" fill="#f4f4f4"/><path d="M301 50 L305 44 L309 50Z" fill="#333"/><rect x="301" y="53" width="20" height="3" fill="#1e1e1e"/><rect x="9" y="111" width="320" height="8" fill="#f0f0f0" stroke="#c8c8c8" stroke-width="1.5"/><line x1="14" y1="115" x2="90" y2="115" stroke="#bbb" stroke-width="2"/><line x1="78" y1="27" x2="78" y2="103" stroke="#cfcfcf" stroke-width="1"/><line x1="84" y1="27" x2="84" y2="103" stroke="#cfcfcf" stroke-width="1"/><line x1="90" y1="27" x2="90" y2="103" stroke="#cfcfcf" stroke-width="1"/><line x1="96" y1="27" x2="96" y2="103" stroke="#cfcfcf" stroke-width="1"/><line x1="102" y1="27" x2="102" y2="103" stroke="#cfcfcf" stroke-width="1"/><line x1="108" y1="27" x2="108" y2="103" stroke="#cfcfcf" stroke-width="1"/><line x1="114" y1="27" x2="114" y2="103" stroke="#cfcfcf" stroke-width="1"/><line x1="120" y1="27" x2="120" y2="103" stroke="#cfcfcf" stroke-width="1"/><line x1="126" y1="27" x2="126" y2="103" stroke="#cfcfcf" stroke-width="1"/><line x1="132" y1="27" x2="132" y2="103" stroke="#cfcfcf" stroke-width="1"/><line x1="138" y1="27" x2="138" y2="103" stroke="#cfcfcf" stroke-width="1"/><line x1="144" y1="27" x2="144" y2="103" stroke="#cfcfcf" stroke-width="1"/><line x1="150" y1="27" x2="150" y2="103" stroke="#cfcfcf" stroke-width="1"/><line x1="156" y1="27" x2="156" y2="103" stroke="#cfcfcf" stroke-width="1"/><line x1="162" y1="27" x2="162" y2="103" stroke="#cfcfcf" stroke-width="1"/><line x1="168" y1="27" x2="168" y2="103" stroke="#cfcfcf" stroke-width="1"/><line x1="174" y1="27" x2="174" y2="103" stroke="#cfcfcf" stroke-width="1"/><line x1="78" y1="27" x2="78" y2="35" stroke="#9a9a9a" stroke-width="1.2"/><line x1="81" y1="27" x2="81" y2="35" stroke="#9a9a9a" stroke-width="1.2"/><line x1="84" y1="27" x2="84" y2="35" stroke="#9a9a9a" stroke-width="1.2"/><line x1="87" y1="27" x2="87" y2="35" stroke="#9a9a9a" stroke-width="1.2"/><line x1="90" y1="27" x2="90" y2="35" stroke="#9a9a9a" stroke-width="1.2"/><line x1="93" y1="27" x2="93" y2="35" stroke="#9a9a9a" stroke-width="1.2"/><line x1="96" y1="27" x2="96" y2="35" stroke="#9a9a9a" stroke-width="1.2"/><line x1="99" y1="27" x2="99" y2="35" stroke="#9a9a9a" stroke-width="1.2"/><line x1="102" y1="27" x2="102" y2="35" stroke="#9a9a9a" stroke-width="1.2"/><line x1="105" y1="27" x2="105" y2="35" stroke="#9a9a9a" stroke-width="1.2"/><line x1="108" y1="27" x2="108" y2="35" stroke="#9a9a9a" stroke-width="1.2"/><line x1="111" y1="27" x2="111" y2="35" stroke="#9a9a9a" stroke-width="1.2"/><line x1="114" y1="27" x2="114" y2="35" stroke="#9a9a9a" stroke-width="1.2"/><line x1="117" y1="27" x2="117" y2="35" stroke="#9a9a9a" stroke-width="1.2"/><line x1="120" y1="27" x2="120" y2="35" stroke="#9a9a9a" stroke-width="1.2"/><line x1="123" y1="27" x2="123" y2="35" stroke="#9a9a9a" stroke-width="1.2"/><line x1="126" y1="27" x2="126" y2="35" stroke="#9a9a9a" stroke-width="1.2"/><line x1="129" y1="27" x2="129" y2="35" stroke="#9a9a9a" stroke-width="1.2"/><line x1="132" y1="27" x2="132" y2="35" stroke="#9a9a9a" stroke-width="1.2"/><line x1="135" y1="27" x2="135" y2="35" stroke="#9a9a9a" stroke-width="1.2"/><line x1="138" y1="27" x2="138" y2="35" stroke="#9a9a9a" stroke-width="1.2"/><line x1="141" y1="27" x2="141" y2="35" stroke="#9a9a9a" stroke-width="1.2"/><line x1="144" y1="27" x2="144" y2="35" stroke="#9a9a9a" stroke-width="1.2"/><line x1="147" y1="27" x2="147" y2="35" stroke="#9a9a9a" stroke-width="1.2"/><line x1="150" y1="27" x2="150" y2="35" stroke="#9a9a9a" stroke-width="1.2"/><line x1="153" y1="27" x2="153" y2="35" stroke="#9a9a9a" stroke-width="1.2"/><line x1="156" y1="27" x2="156" y2="35" stroke="#9a9a9a" stroke-width="1.2"/><line x1="159" y1="27" x2="159" y2="35" stroke="#9a9a9a" stroke-width="1.2"/><line x1="162" y1="27" x2="162" y2="35" stroke="#9a9a9a" stroke-width="1.2"/><line x1="165" y1="27" x2="165" y2="35" stroke="#9a9a9a" stroke-width="1.2"/><line x1="168" y1="27" x2="168" y2="35" stroke="#9a9a9a" stroke-width="1.2"/><line x1="171" y1="27" x2="171" y2="35" stroke="#9a9a9a" stroke-width="1.2"/><line x1="174" y1="27" x2="174" y2="35" stroke="#9a9a9a" stroke-width="1.2"/><rect x="57" y="69" width="130" height="16" fill="#1f1f1f"/><line x1="60" y1="77" x2="78" y2="77" stroke="#ddd" stroke-width="2"/><line x1="100" y1="77" x2="115" y2="77" stroke="#999" stroke-width="2"/><rect x="79" y="67" width="15" height="21" fill="#111"/><rect x="83" y="72" width="6" height="8" fill="#888"/><path d="M50 55 q0 14 10 20 M50 101 q0 -14 10 -20" stroke="#222" stroke-width="5" fill="none"/><path d="M38 78 l6 -4 v8z" stroke="#999" stroke-width="1.5" fill="none"/><line x1="88" y1="51" x2="88" y2="103" stroke="#1b1b1b" stroke-width="5"/><line x1="122" y1="54" x2="122" y2="102" stroke="#1b1b1b" stroke-width="5"/><path d="M100 58 h10 M140 58 h8 M135 95 l5 -3" stroke="#999" stroke-width="2"/><polygon points="40,160 96,120 150,155 90,215 60,215" fill="url(#hatch)" opacity=".55"/><path d="M68 142 L75 134 L82 140 L69 155 L75 178 L105 195 L150 195 L150 182 L118 182 L95 166 L103 157 L96 152 L86 160 L73 150Z" fill="#1d1d1d"/><rect x="82" y="180" width="68" height="19" fill="#2b2b2b"/><rect x="86" y="183" width="30" height="12" fill="url(#gridl)"/><path d="M50 185 L85 205 M60 178 l30 20" stroke="#666" stroke-width="4"/><line x1="96" y1="123" x2="128" y2="148" stroke="#aaa" stroke-width="5"/><rect x="112" y="199" width="8" height="12" fill="#222"/></g></symbol><symbol id="thB2" viewBox="0 0 334 215"><g filter="url(#bl)"><rect x="8" y="8.5" width="322" height="215" fill="none" stroke="#c9c9c9" stroke-width="2"/><rect x="295" y="9" width="35" height="206" fill="#e9e9e9"/><rect x="297" y="9" width="31" height="36" fill="#d0d0d0" opacity=".8"/><line x1="296" y1="12" x2="329" y2="12" stroke="#f7f7f7" stroke-width="1.5"/><line x1="296" y1="19" x2="329" y2="19" stroke="#f7f7f7" stroke-width="1.5"/><line x1="296" y1="26" x2="329" y2="26" stroke="#f7f7f7" stroke-width="1.5"/><line x1="296" y1="33" x2="329" y2="33" stroke="#f7f7f7" stroke-width="1.5"/><line x1="296" y1="40" x2="329" y2="40" stroke="#f7f7f7" stroke-width="1.5"/><line x1="296" y1="47" x2="329" y2="47" stroke="#f7f7f7" stroke-width="1.5"/><line x1="296" y1="54" x2="329" y2="54" stroke="#f7f7f7" stroke-width="1.5"/><line x1="296" y1="61" x2="329" y2="61" stroke="#f7f7f7" stroke-width="1.5"/><line x1="296" y1="68" x2="329" y2="68" stroke="#f7f7f7" stroke-width="1.5"/><line x1="296" y1="75" x2="329" y2="75" stroke="#f7f7f7" stroke-width="1.5"/><line x1="296" y1="82" x2="329" y2="82" stroke="#f7f7f7" stroke-width="1.5"/><line x1="296" y1="89" x2="329" y2="89" stroke="#f7f7f7" stroke-width="1.5"/><line x1="296" y1="96" x2="329" y2="96" stroke="#f7f7f7" stroke-width="1.5"/><line x1="296" y1="103" x2="329" y2="103" stroke="#f7f7f7" stroke-width="1.5"/><line x1="296" y1="110" x2="329" y2="110" stroke="#f7f7f7" stroke-width="1.5"/><line x1="296" y1="117" x2="329" y2="117" stroke="#f7f7f7" stroke-width="1.5"/><line x1="296" y1="124" x2="329" y2="124" stroke="#f7f7f7" stroke-width="1.5"/><line x1="296" y1="131" x2="329" y2="131" stroke="#f7f7f7" stroke-width="1.5"/><line x1="296" y1="138" x2="329" y2="138" stroke="#f7f7f7" stroke-width="1.5"/><line x1="296" y1="145" x2="329" y2="145" stroke="#f7f7f7" stroke-width="1.5"/><line x1="296" y1="152" x2="329" y2="152" stroke="#f7f7f7" stroke-width="1.5"/><line x1="296" y1="159" x2="329" y2="159" stroke="#f7f7f7" stroke-width="1.5"/><line x1="296" y1="166" x2="329" y2="166" stroke="#f7f7f7" stroke-width="1.5"/><line x1="296" y1="173" x2="329" y2="173" stroke="#f7f7f7" stroke-width="1.5"/><line x1="296" y1="180" x2="329" y2="180" stroke="#f7f7f7" stroke-width="1.5"/><line x1="296" y1="187" x2="329" y2="187" stroke="#f7f7f7" stroke-width="1.5"/><line x1="296" y1="194" x2="329" y2="194" stroke="#f7f7f7" stroke-width="1.5"/><line x1="296" y1="201" x2="329" y2="201" stroke="#f7f7f7" stroke-width="1.5"/><line x1="296" y1="208" x2="329" y2="208" stroke="#f7f7f7" stroke-width="1.5"/><rect x="298" y="80" width="14" height="6" fill="#777"/><rect x="298" y="88" width="18" height="8" fill="#888"/><rect x="314" y="101" width="10" height="6" fill="#666"/><rect x="306" y="113" width="6" height="6" fill="#555"/><rect x="296" y="9" width="33" height="150" fill="url(#n1)"/><rect x="297" y="125" width="31" height="30" fill="url(#n2)"/><rect x="297" y="161" width="31" height="26" fill="#fafafa"/><path d="M304 185 L311 178 L312 165 L313 178 L320 185Z" fill="#888"/><rect x="297" y="190" width="31" height="25" fill="url(#n1)"/><rect x="298" y="42" width="28" height="17" fill="#f4f4f4"/><path d="M301 50 L305 44 L309 50Z" fill="#333"/><rect x="301" y="53" width="20" height="3" fill="#1e1e1e"/><path d="M25 48 Q60 64 100 42 M205 42 Q245 64 280 46" stroke="#d8d8d8" stroke-width="2" fill="none"/><circle cx="255" cy="38" r="5" fill="none" stroke="#bbb" stroke-width="1.5"/><path d="M250 33 l10 10 M260 33 l-10 10" stroke="#ccc" stroke-width="1"/><ellipse cx="156" cy="24" rx="8" ry="12" fill="url(#n2)"/><ellipse cx="156" cy="24" rx="8" ry="12" fill="#999" opacity=".35"/><path d="M151 32 h10 M156 28 v10" stroke="#777" stroke-width="2"/><rect x="148" y="40" width="16" height="34" fill="url(#n4)"/><rect x="148" y="40" width="16" height="34" fill="#444" opacity=".5"/><rect x="117" y="42" width="5" height="22" fill="#555"/><rect x="190" y="46" width="5" height="20" fill="#888"/><polygon points="100,55 148,45 148,72 93,103" fill="url(#n1)"/><polygon points="164,45 205,45 275,62 282,105 240,108 164,72" fill="url(#n1)"/><polygon points="175,62 240,70 270,100 238,108 190,92" fill="url(#n2)"/><path d="M200 45 L275 70 M210 68 l6 14 M245 70 v16 M236 78 h18" stroke="#777" stroke-width="2.5" fill="none"/><circle cx="187" cy="78" r="5" fill="#555"/><circle cx="262" cy="102" r="5" fill="#666"/><circle cx="112" cy="84" r="5" fill="#555"/><polygon points="156,72 93,103 91,170 237,170 240,108" fill="url(#n3)"/><polygon points="156,72 93,103 91,170 237,170 240,108" fill="#555" opacity=".45"/><path d="M156 74 L93 104 M156 74 L238 108" stroke="#1a1a1a" stroke-width="4"/><rect x="91" y="140" width="150" height="30" fill="url(#n4)"/><rect x="91" y="140" width="150" height="30" fill="#222" opacity=".35"/><path d="M91 118 H237 M91 136 H237" stroke="#2a2a2a" stroke-width="2.5"/><polygon points="237,108 282,130 282,205 237,200" fill="url(#n2)"/><polygon points="237,108 282,130 282,205 237,200" fill="#aaa" opacity=".35"/><polygon points="232,112 262,118 282,132 280,150 255,158 237,168" fill="url(#n3)"/><polygon points="232,112 262,118 282,132 280,150 255,158 237,168" fill="#444" opacity=".35"/><polygon points="91,170 240,170 282,175 282,206 91,208" fill="url(#n2)"/><polygon points="91,170 282,170 282,206 91,208" fill="#bbb" opacity=".35"/><path d="M91 205 Q180 195 282 205" stroke="#666" stroke-width="3" fill="none"/></g></symbol><symbol id="thB5" viewBox="0 0 334 215"><g filter="url(#bl)"><rect x="8" y="8.5" width="322" height="215" fill="none" stroke="#c9c9c9" stroke-width="2"/><rect x="295" y="9" width="35" height="206" fill="#e9e9e9"/><rect x="297" y="9" width="31" height="36" fill="#d0d0d0" opacity=".8"/><line x1="296" y1="12" x2="329" y2="12" stroke="#f7f7f7" stroke-width="1.5"/><line x1="296" y1="19" x2="329" y2="19" stroke="#f7f7f7" stroke-width="1.5"/><line x1="296" y1="26" x2="329" y2="26" stroke="#f7f7f7" stroke-width="1.5"/><line x1="296" y1="33" x2="329" y2="33" stroke="#f7f7f7" stroke-width="1.5"/><line x1="296" y1="40" x2="329" y2="40" stroke="#f7f7f7" stroke-width="1.5"/><line x1="296" y1="47" x2="329" y2="47" stroke="#f7f7f7" stroke-width="1.5"/><line x1="296" y1="54" x2="329" y2="54" stroke="#f7f7f7" stroke-width="1.5"/><line x1="296" y1="61" x2="329" y2="61" stroke="#f7f7f7" stroke-width="1.5"/><line x1="296" y1="68" x2="329" y2="68" stroke="#f7f7f7" stroke-width="1.5"/><line x1="296" y1="75" x2="329" y2="75" stroke="#f7f7f7" stroke-width="1.5"/><line x1="296" y1="82" x2="329" y2="82" stroke="#f7f7f7" stroke-width="1.5"/><line x1="296" y1="89" x2="329" y2="89" stroke="#f7f7f7" stroke-width="1.5"/><line x1="296" y1="96" x2="329" y2="96" stroke="#f7f7f7" stroke-width="1.5"/><line x1="296" y1="103" x2="329" y2="103" stroke="#f7f7f7" stroke-width="1.5"/><line x1="296" y1="110" x2="329" y2="110" stroke="#f7f7f7" stroke-width="1.5"/><line x1="296" y1="117" x2="329" y2="117" stroke="#f7f7f7" stroke-width="1.5"/><line x1="296" y1="124" x2="329" y2="124" stroke="#f7f7f7" stroke-width="1.5"/><line x1="296" y1="131" x2="329" y2="131" stroke="#f7f7f7" stroke-width="1.5"/><line x1="296" y1="138" x2="329" y2="138" stroke="#f7f7f7" stroke-width="1.5"/><line x1="296" y1="145" x2="329" y2="145" stroke="#f7f7f7" stroke-width="1.5"/><line x1="296" y1="152" x2="329" y2="152" stroke="#f7f7f7" stroke-width="1.5"/><line x1="296" y1="159" x2="329" y2="159" stroke="#f7f7f7" stroke-width="1.5"/><line x1="296" y1="166" x2="329" y2="166" stroke="#f7f7f7" stroke-width="1.5"/><line x1="296" y1="173" x2="329" y2="173" stroke="#f7f7f7" stroke-width="1.5"/><line x1="296" y1="180" x2="329" y2="180" stroke="#f7f7f7" stroke-width="1.5"/><line x1="296" y1="187" x2="329" y2="187" stroke="#f7f7f7" stroke-width="1.5"/><line x1="296" y1="194" x2="329" y2="194" stroke="#f7f7f7" stroke-width="1.5"/><line x1="296" y1="201" x2="329" y2="201" stroke="#f7f7f7" stroke-width="1.5"/><line x1="296" y1="208" x2="329" y2="208" stroke="#f7f7f7" stroke-width="1.5"/><rect x="298" y="80" width="14" height="6" fill="#777"/><rect x="298" y="88" width="18" height="8" fill="#888"/><rect x="314" y="101" width="10" height="6" fill="#666"/><rect x="306" y="113" width="6" height="6" fill="#555"/><rect x="296" y="9" width="33" height="150" fill="url(#n1)"/><rect x="297" y="125" width="31" height="30" fill="url(#n2)"/><rect x="297" y="161" width="31" height="26" fill="#fafafa"/><path d="M304 185 L311 178 L312 165 L313 178 L320 185Z" fill="#888"/><rect x="297" y="190" width="31" height="25" fill="url(#n1)"/><rect x="298" y="42" width="28" height="17" fill="#f4f4f4"/><path d="M301 50 L305 44 L309 50Z" fill="#333"/><rect x="301" y="53" width="20" height="3" fill="#1e1e1e"/><path d="M25 48 Q60 64 100 42 M205 42 Q245 64 280 46" stroke="#d8d8d8" stroke-width="2" fill="none"/><circle cx="255" cy="38" r="5" fill="none" stroke="#bbb" stroke-width="1.5"/><path d="M250 33 l10 10 M260 33 l-10 10" stroke="#ccc" stroke-width="1"/><rect x="148" y="10" width="16" height="28" fill="url(#n1)"/><rect x="148" y="35" width="16" height="40" fill="url(#n4)"/><rect x="148" y="35" width="16" height="40" fill="#333" opacity=".5"/><path d="M120 45 H185 M120 45 v35 M185 45 v35" stroke="#aaa" stroke-width="2" fill="none"/><polygon points="100,60 148,48 148,72 93,103" fill="url(#n1)"/><polygon points="164,45 200,55 250,80 280,100 240,110 164,72" fill="url(#n1)"/><path d="M205 50 Q250 70 280 65 M195 60 Q240 90 280 82" stroke="#bbb" stroke-width="3" fill="none"/><polygon points="156,64 91,102 91,215 240,215 240,110 200,100" fill="url(#n3)"/><polygon points="156,64 91,102 91,215 240,215 240,110 200,100" fill="#444" opacity=".5"/><path d="M156 66 Q125 95 91 105 M156 66 Q185 95 210 102" stroke="#151515" stroke-width="6" fill="none"/><polygon points="210,100 270,110 278,130 240,150" fill="url(#n4)"/><polygon points="210,100 270,110 278,130 240,150" fill="#222" opacity=".4"/><polygon points="237,130 282,120 282,215 237,215" fill="url(#n2)"/><path d="M91 145 H240 M91 178 H240" stroke="#1c1c1c" stroke-width="4"/></g></symbol><symbol id="thB8" viewBox="0 0 334 215"><g filter="url(#bl)"><rect x="8" y="8.5" width="322" height="215" fill="none" stroke="#c9c9c9" stroke-width="2"/><rect x="295" y="9" width="35" height="206" fill="#e9e9e9"/><rect x="297" y="9" width="31" height="36" fill="#d0d0d0" opacity=".8"/><line x1="296" y1="12" x2="329" y2="12" stroke="#f7f7f7" stroke-width="1.5"/><line x1="296" y1="19" x2="329" y2="19" stroke="#f7f7f7" stroke-width="1.5"/><line x1="296" y1="26" x2="329" y2="26" stroke="#f7f7f7" stroke-width="1.5"/><line x1="296" y1="33" x2="329" y2="33" stroke="#f7f7f7" stroke-width="1.5"/><line x1="296" y1="40" x2="329" y2="40" stroke="#f7f7f7" stroke-width="1.5"/><line x1="296" y1="47" x2="329" y2="47" stroke="#f7f7f7" stroke-width="1.5"/><line x1="296" y1="54" x2="329" y2="54" stroke="#f7f7f7" stroke-width="1.5"/><line x1="296" y1="61" x2="329" y2="61" stroke="#f7f7f7" stroke-width="1.5"/><line x1="296" y1="68" x2="329" y2="68" stroke="#f7f7f7" stroke-width="1.5"/><line x1="296" y1="75" x2="329" y2="75" stroke="#f7f7f7" stroke-width="1.5"/><line x1="296" y1="82" x2="329" y2="82" stroke="#f7f7f7" stroke-width="1.5"/><line x1="296" y1="89" x2="329" y2="89" stroke="#f7f7f7" stroke-width="1.5"/><line x1="296" y1="96" x2="329" y2="96" stroke="#f7f7f7" stroke-width="1.5"/><line x1="296" y1="103" x2="329" y2="103" stroke="#f7f7f7" stroke-width="1.5"/><line x1="296" y1="110" x2="329" y2="110" stroke="#f7f7f7" stroke-width="1.5"/><line x1="296" y1="117" x2="329" y2="117" stroke="#f7f7f7" stroke-width="1.5"/><line x1="296" y1="124" x2="329" y2="124" stroke="#f7f7f7" stroke-width="1.5"/><line x1="296" y1="131" x2="329" y2="131" stroke="#f7f7f7" stroke-width="1.5"/><line x1="296" y1="138" x2="329" y2="138" stroke="#f7f7f7" stroke-width="1.5"/><line x1="296" y1="145" x2="329" y2="145" stroke="#f7f7f7" stroke-width="1.5"/><line x1="296" y1="152" x2="329" y2="152" stroke="#f7f7f7" stroke-width="1.5"/><line x1="296" y1="159" x2="329" y2="159" stroke="#f7f7f7" stroke-width="1.5"/><line x1="296" y1="166" x2="329" y2="166" stroke="#f7f7f7" stroke-width="1.5"/><line x1="296" y1="173" x2="329" y2="173" stroke="#f7f7f7" stroke-width="1.5"/><line x1="296" y1="180" x2="329" y2="180" stroke="#f7f7f7" stroke-width="1.5"/><line x1="296" y1="187" x2="329" y2="187" stroke="#f7f7f7" stroke-width="1.5"/><line x1="296" y1="194" x2="329" y2="194" stroke="#f7f7f7" stroke-width="1.5"/><line x1="296" y1="201" x2="329" y2="201" stroke="#f7f7f7" stroke-width="1.5"/><line x1="296" y1="208" x2="329" y2="208" stroke="#f7f7f7" stroke-width="1.5"/><rect x="298" y="80" width="14" height="6" fill="#777"/><rect x="298" y="88" width="18" height="8" fill="#888"/><rect x="314" y="101" width="10" height="6" fill="#666"/><rect x="306" y="113" width="6" height="6" fill="#555"/><rect x="296" y="9" width="33" height="150" fill="url(#n1)"/><rect x="297" y="125" width="31" height="30" fill="url(#n2)"/><rect x="297" y="161" width="31" height="26" fill="#fafafa"/><path d="M304 185 L311 178 L312 165 L313 178 L320 185Z" fill="#888"/><rect x="297" y="190" width="31" height="25" fill="url(#n1)"/><rect x="298" y="42" width="28" height="17" fill="#f4f4f4"/><path d="M301 50 L305 44 L309 50Z" fill="#333"/><rect x="301" y="53" width="20" height="3" fill="#1e1e1e"/><path d="M25 48 Q60 64 100 42 M205 42 Q245 64 280 46" stroke="#d8d8d8" stroke-width="2" fill="none"/><circle cx="255" cy="38" r="5" fill="none" stroke="#bbb" stroke-width="1.5"/><path d="M250 33 l10 10 M260 33 l-10 10" stroke="#ccc" stroke-width="1"/><rect x="150" y="12" width="14" height="28" fill="url(#n1)"/><rect x="148" y="38" width="16" height="32" fill="url(#n4)"/><rect x="148" y="38" width="16" height="32" fill="#222" opacity=".5"/><path d="M120 45 H185 M120 45 v30 M185 45 v30" stroke="#aaa" stroke-width="2" fill="none"/><polygon points="100,60 148,45 148,70 93,100" fill="url(#n1)"/><polygon points="185,60 230,75 275,100 245,125 200,100" fill="url(#n1)"/><path d="M200 52 Q240 70 280 60 M195 75 Q240 95 282 80" stroke="#c4c4c4" stroke-width="3" fill="none"/><polygon points="156,66 91,108 91,125 250,125 230,108" fill="url(#n3)"/><polygon points="156,66 91,108 91,125 250,125 230,108" fill="#444" opacity=".4"/><path d="M156 66 Q125 98 91 108 M156 66 Q190 98 235 108" stroke="#111" stroke-width="6" fill="none"/><rect x="91" y="118" width="190" height="10" fill="#1b1b1b"/><polygon points="91,126 235,126 240,146 91,146" fill="url(#n2)"/><rect x="91" y="144" width="160" height="20" fill="url(#n4)"/><rect x="91" y="144" width="160" height="20" fill="#1c1c1c" opacity=".5"/><rect x="147" y="147" width="18" height="9" fill="#bbb"/><rect x="91" y="155" width="150" height="5" fill="#ddd" opacity=".7"/><polygon points="91,165 248,165 250,200 91,205" fill="url(#n2)"/><polygon points="91,165 248,165 250,200 91,205" fill="#ccc" opacity=".4"/><path d="M91 200 Q170 190 240 205" stroke="#444" stroke-width="4" fill="none"/><polygon points="240,112 282,120 282,210 242,205" fill="url(#n2)"/><polygon points="235,112 282,125 270,150 245,160" fill="url(#n3)"/><path d="M245 88 h30 M258 88 v25" stroke="#444" stroke-width="4"/></g></symbol><symbol id="thC3" viewBox="0 0 334 215"><g filter="url(#bl)"><rect x="8" y="8.5" width="322" height="215" fill="none" stroke="#c9c9c9" stroke-width="2"/><rect x="295" y="9" width="35" height="206" fill="#e9e9e9"/><rect x="297" y="9" width="31" height="36" fill="#d0d0d0" opacity=".8"/><line x1="296" y1="12" x2="329" y2="12" stroke="#f7f7f7" stroke-width="1.5"/><line x1="296" y1="19" x2="329" y2="19" stroke="#f7f7f7" stroke-width="1.5"/><line x1="296" y1="26" x2="329" y2="26" stroke="#f7f7f7" stroke-width="1.5"/><line x1="296" y1="33" x2="329" y2="33" stroke="#f7f7f7" stroke-width="1.5"/><line x1="296" y1="40" x2="329" y2="40" stroke="#f7f7f7" stroke-width="1.5"/><line x1="296" y1="47" x2="329" y2="47" stroke="#f7f7f7" stroke-width="1.5"/><line x1="296" y1="54" x2="329" y2="54" stroke="#f7f7f7" stroke-width="1.5"/><line x1="296" y1="61" x2="329" y2="61" stroke="#f7f7f7" stroke-width="1.5"/><line x1="296" y1="68" x2="329" y2="68" stroke="#f7f7f7" stroke-width="1.5"/><line x1="296" y1="75" x2="329" y2="75" stroke="#f7f7f7" stroke-width="1.5"/><line x1="296" y1="82" x2="329" y2="82" stroke="#f7f7f7" stroke-width="1.5"/><line x1="296" y1="89" x2="329" y2="89" stroke="#f7f7f7" stroke-width="1.5"/><line x1="296" y1="96" x2="329" y2="96" stroke="#f7f7f7" stroke-width="1.5"/><line x1="296" y1="103" x2="329" y2="103" stroke="#f7f7f7" stroke-width="1.5"/><line x1="296" y1="110" x2="329" y2="110" stroke="#f7f7f7" stroke-width="1.5"/><line x1="296" y1="117" x2="329" y2="117" stroke="#f7f7f7" stroke-width="1.5"/><line x1="296" y1="124" x2="329" y2="124" stroke="#f7f7f7" stroke-width="1.5"/><line x1="296" y1="131" x2="329" y2="131" stroke="#f7f7f7" stroke-width="1.5"/><line x1="296" y1="138" x2="329" y2="138" stroke="#f7f7f7" stroke-width="1.5"/><line x1="296" y1="145" x2="329" y2="145" stroke="#f7f7f7" stroke-width="1.5"/><line x1="296" y1="152" x2="329" y2="152" stroke="#f7f7f7" stroke-width="1.5"/><line x1="296" y1="159" x2="329" y2="159" stroke="#f7f7f7" stroke-width="1.5"/><line x1="296" y1="166" x2="329" y2="166" stroke="#f7f7f7" stroke-width="1.5"/><line x1="296" y1="173" x2="329" y2="173" stroke="#f7f7f7" stroke-width="1.5"/><line x1="296" y1="180" x2="329" y2="180" stroke="#f7f7f7" stroke-width="1.5"/><line x1="296" y1="187" x2="329" y2="187" stroke="#f7f7f7" stroke-width="1.5"/><line x1="296" y1="194" x2="329" y2="194" stroke="#f7f7f7" stroke-width="1.5"/><line x1="296" y1="201" x2="329" y2="201" stroke="#f7f7f7" stroke-width="1.5"/><line x1="296" y1="208" x2="329" y2="208" stroke="#f7f7f7" stroke-width="1.5"/><rect x="298" y="80" width="14" height="6" fill="#777"/><rect x="298" y="88" width="18" height="8" fill="#888"/><rect x="314" y="101" width="10" height="6" fill="#666"/><rect x="306" y="113" width="6" height="6" fill="#555"/><rect x="296" y="9" width="33" height="150" fill="url(#n1)"/><rect x="297" y="125" width="31" height="30" fill="url(#n2)"/><rect x="297" y="161" width="31" height="26" fill="#fafafa"/><path d="M304 185 L311 178 L312 165 L313 178 L320 185Z" fill="#888"/><rect x="297" y="190" width="31" height="25" fill="url(#n1)"/><rect x="298" y="42" width="28" height="17" fill="#f4f4f4"/><path d="M301 50 L305 44 L309 50Z" fill="#333"/><rect x="301" y="53" width="20" height="3" fill="#1e1e1e"/><line x1="104" y1="34" x2="212" y2="34" stroke="#d6d6d6" stroke-width="1.2"/><line x1="104" y1="40.5" x2="212" y2="40.5" stroke="#d6d6d6" stroke-width="1.2"/><line x1="104" y1="47.0" x2="212" y2="47.0" stroke="#d6d6d6" stroke-width="1.2"/><line x1="104" y1="53.5" x2="212" y2="53.5" stroke="#d6d6d6" stroke-width="1.2"/><line x1="104" y1="60.0" x2="212" y2="60.0" stroke="#d6d6d6" stroke-width="1.2"/><line x1="104" y1="66.5" x2="212" y2="66.5" stroke="#d6d6d6" stroke-width="1.2"/><line x1="104" y1="73.0" x2="212" y2="73.0" stroke="#d6d6d6" stroke-width="1.2"/><line x1="104" y1="79.5" x2="212" y2="79.5" stroke="#d6d6d6" stroke-width="1.2"/><line x1="104" y1="86.0" x2="212" y2="86.0" stroke="#d6d6d6" stroke-width="1.2"/><line x1="104" y1="92.5" x2="212" y2="92.5" stroke="#d6d6d6" stroke-width="1.2"/><line x1="104" y1="99.0" x2="212" y2="99.0" stroke="#d6d6d6" stroke-width="1.2"/><line x1="104" y1="105.5" x2="212" y2="105.5" stroke="#d6d6d6" stroke-width="1.2"/><line x1="104" y1="112.0" x2="212" y2="112.0" stroke="#d6d6d6" stroke-width="1.2"/><line x1="104" y1="118.5" x2="212" y2="118.5" stroke="#d6d6d6" stroke-width="1.2"/><line x1="104" y1="125.0" x2="212" y2="125.0" stroke="#d6d6d6" stroke-width="1.2"/><line x1="104" y1="131.5" x2="212" y2="131.5" stroke="#d6d6d6" stroke-width="1.2"/><line x1="104" y1="138.0" x2="212" y2="138.0" stroke="#d6d6d6" stroke-width="1.2"/><line x1="104" y1="144.5" x2="212" y2="144.5" stroke="#d6d6d6" stroke-width="1.2"/><line x1="104" y1="151.0" x2="212" y2="151.0" stroke="#d6d6d6" stroke-width="1.2"/><line x1="104" y1="157.5" x2="212" y2="157.5" stroke="#d6d6d6" stroke-width="1.2"/><line x1="104" y1="164.0" x2="212" y2="164.0" stroke="#d6d6d6" stroke-width="1.2"/><line x1="104" y1="170.5" x2="212" y2="170.5" stroke="#d6d6d6" stroke-width="1.2"/><line x1="104" y1="177.0" x2="212" y2="177.0" stroke="#d6d6d6" stroke-width="1.2"/><line x1="104" y1="183.5" x2="212" y2="183.5" stroke="#d6d6d6" stroke-width="1.2"/><line x1="104" y1="190.0" x2="212" y2="190.0" stroke="#d6d6d6" stroke-width="1.2"/><line x1="104" y1="196.5" x2="212" y2="196.5" stroke="#d6d6d6" stroke-width="1.2"/><line x1="104" y1="203.0" x2="212" y2="203.0" stroke="#d6d6d6" stroke-width="1.2"/><polygon points="104,40 212,40 212,180 225,205 95,205 104,180" fill="url(#n1)"/><polygon points="104,45 135,45 135,190 104,190" fill="url(#n1)"/><polygon points="180,45 212,45 212,190 180,190" fill="url(#n1)"/><line x1="104" y1="32" x2="104" y2="180" stroke="#e0e0e0" stroke-width="2"/><line x1="212" y1="32" x2="212" y2="180" stroke="#e0e0e0" stroke-width="2"/><line x1="157" y1="17" x2="157" y2="110" stroke="#777" stroke-width="4"/><path d="M140 22 l3 4 l3 -4 M168 22 l3 4 l3 -4" stroke="#aaa" stroke-width="2" fill="none"/><rect x="145" y="48" width="24" height="22" fill="none" stroke="#888" stroke-width="2"/><rect x="153" y="54" width="8" height="4" fill="#444"/><line x1="128" y1="69" x2="185" y2="69" stroke="#444" stroke-width="3"/><path d="M106 49 H132 M118 35 V63" stroke="#444" stroke-width="3"/><polygon points="112,41 125,49 112,57" fill="#666"/><path d="M106 112 H132 M118 98 V126" stroke="#444" stroke-width="3"/><polygon points="112,104 125,112 112,120" fill="#666"/><path d="M106 145 H132 M118 131 V159" stroke="#444" stroke-width="3"/><polygon points="112,137 125,145 112,153" fill="#666"/><path d="M105 179 H131 M117 165 V193" stroke="#444" stroke-width="3"/><polygon points="111,171 124,179 111,187" fill="#666"/><path d="M183 52 H209 M195 38 V66" stroke="#444" stroke-width="3"/><polygon points="189,44 202,52 189,60" fill="#666"/><path d="M181 86 H207 M193 72 V100" stroke="#444" stroke-width="3"/><polygon points="187,78 200,86 187,94" fill="#666"/><path d="M183 118 H209 M195 104 V132" stroke="#444" stroke-width="3"/><polygon points="189,110 202,118 189,126" fill="#666"/><path d="M181 152 H207 M193 138 V166" stroke="#444" stroke-width="3"/><polygon points="187,144 200,152 187,160" fill="#666"/><path d="M185 186 H211 M197 172 V200" stroke="#444" stroke-width="3"/><polygon points="191,178 204,186 191,194" fill="#666"/><rect x="129" y="63" width="12" height="8" fill="#555"/><rect x="169" y="63" width="12" height="8" fill="#555"/><rect x="130" y="96" width="12" height="8" fill="#555"/><rect x="169" y="96" width="12" height="8" fill="#555"/><rect x="132" y="129" width="12" height="8" fill="#555"/><rect x="169" y="129" width="12" height="8" fill="#555"/><rect x="132" y="163" width="12" height="8" fill="#555"/><rect x="169" y="163" width="12" height="8" fill="#555"/><polygon points="148,118 166,118 168,190 172,215 144,215 146,190" fill="#1b1b1b"/><line x1="149" y1="124" x2="165" y2="124" stroke="#666" stroke-width="1.5"/><line x1="149" y1="131" x2="165" y2="131" stroke="#666" stroke-width="1.5"/><line x1="149" y1="138" x2="165" y2="138" stroke="#666" stroke-width="1.5"/><line x1="149" y1="145" x2="165" y2="145" stroke="#666" stroke-width="1.5"/><line x1="149" y1="152" x2="165" y2="152" stroke="#666" stroke-width="1.5"/><line x1="149" y1="159" x2="165" y2="159" stroke="#666" stroke-width="1.5"/><line x1="149" y1="166" x2="165" y2="166" stroke="#666" stroke-width="1.5"/><line x1="149" y1="173" x2="165" y2="173" stroke="#666" stroke-width="1.5"/><line x1="149" y1="180" x2="165" y2="180" stroke="#666" stroke-width="1.5"/><line x1="149" y1="187" x2="165" y2="187" stroke="#666" stroke-width="1.5"/><line x1="149" y1="194" x2="165" y2="194" stroke="#666" stroke-width="1.5"/><line x1="149" y1="201" x2="165" y2="201" stroke="#666" stroke-width="1.5"/><path d="M150 75 h14 M150 84 h14 M150 92 h14 M150 100 h14" stroke="#555" stroke-width="2.5"/><path d="M95 205 l8 -10 M222 205 l-8 -10 M125 210 h6 M180 207 l6 -4" stroke="#666" stroke-width="4"/><circle cx="134" cy="37" r="4" fill="#777"/></g></symbol><symbol id="thC6" viewBox="0 0 334 215"><g filter="url(#bl)"><rect x="8" y="8.5" width="322" height="215" fill="none" stroke="#c9c9c9" stroke-width="2"/><rect x="295" y="9" width="35" height="206" fill="#e9e9e9"/><rect x="297" y="9" width="31" height="36" fill="#d0d0d0" opacity=".8"/><line x1="296" y1="12" x2="329" y2="12" stroke="#f7f7f7" stroke-width="1.5"/><line x1="296" y1="19" x2="329" y2="19" stroke="#f7f7f7" stroke-width="1.5"/><line x1="296" y1="26" x2="329" y2="26" stroke="#f7f7f7" stroke-width="1.5"/><line x1="296" y1="33" x2="329" y2="33" stroke="#f7f7f7" stroke-width="1.5"/><line x1="296" y1="40" x2="329" y2="40" stroke="#f7f7f7" stroke-width="1.5"/><line x1="296" y1="47" x2="329" y2="47" stroke="#f7f7f7" stroke-width="1.5"/><line x1="296" y1="54" x2="329" y2="54" stroke="#f7f7f7" stroke-width="1.5"/><line x1="296" y1="61" x2="329" y2="61" stroke="#f7f7f7" stroke-width="1.5"/><line x1="296" y1="68" x2="329" y2="68" stroke="#f7f7f7" stroke-width="1.5"/><line x1="296" y1="75" x2="329" y2="75" stroke="#f7f7f7" stroke-width="1.5"/><line x1="296" y1="82" x2="329" y2="82" stroke="#f7f7f7" stroke-width="1.5"/><line x1="296" y1="89" x2="329" y2="89" stroke="#f7f7f7" stroke-width="1.5"/><line x1="296" y1="96" x2="329" y2="96" stroke="#f7f7f7" stroke-width="1.5"/><line x1="296" y1="103" x2="329" y2="103" stroke="#f7f7f7" stroke-width="1.5"/><line x1="296" y1="110" x2="329" y2="110" stroke="#f7f7f7" stroke-width="1.5"/><line x1="296" y1="117" x2="329" y2="117" stroke="#f7f7f7" stroke-width="1.5"/><line x1="296" y1="124" x2="329" y2="124" stroke="#f7f7f7" stroke-width="1.5"/><line x1="296" y1="131" x2="329" y2="131" stroke="#f7f7f7" stroke-width="1.5"/><line x1="296" y1="138" x2="329" y2="138" stroke="#f7f7f7" stroke-width="1.5"/><line x1="296" y1="145" x2="329" y2="145" stroke="#f7f7f7" stroke-width="1.5"/><line x1="296" y1="152" x2="329" y2="152" stroke="#f7f7f7" stroke-width="1.5"/><line x1="296" y1="159" x2="329" y2="159" stroke="#f7f7f7" stroke-width="1.5"/><line x1="296" y1="166" x2="329" y2="166" stroke="#f7f7f7" stroke-width="1.5"/><line x1="296" y1="173" x2="329" y2="173" stroke="#f7f7f7" stroke-width="1.5"/><line x1="296" y1="180" x2="329" y2="180" stroke="#f7f7f7" stroke-width="1.5"/><line x1="296" y1="187" x2="329" y2="187" stroke="#f7f7f7" stroke-width="1.5"/><line x1="296" y1="194" x2="329" y2="194" stroke="#f7f7f7" stroke-width="1.5"/><line x1="296" y1="201" x2="329" y2="201" stroke="#f7f7f7" stroke-width="1.5"/><line x1="296" y1="208" x2="329" y2="208" stroke="#f7f7f7" stroke-width="1.5"/><rect x="298" y="80" width="14" height="6" fill="#777"/><rect x="298" y="88" width="18" height="8" fill="#888"/><rect x="314" y="101" width="10" height="6" fill="#666"/><rect x="306" y="113" width="6" height="6" fill="#555"/><rect x="296" y="9" width="33" height="150" fill="url(#n1)"/><rect x="297" y="125" width="31" height="30" fill="url(#n2)"/><rect x="297" y="161" width="31" height="26" fill="#fafafa"/><path d="M304 185 L311 178 L312 165 L313 178 L320 185Z" fill="#888"/><rect x="297" y="190" width="31" height="25" fill="url(#n1)"/><rect x="298" y="42" width="28" height="17" fill="#f4f4f4"/><path d="M301 50 L305 44 L309 50Z" fill="#333"/><rect x="301" y="53" width="20" height="3" fill="#1e1e1e"/><line x1="108" y1="49" x2="198" y2="49" stroke="#d2d2d2" stroke-width="1.2"/><line x1="108" y1="55.7" x2="198" y2="55.7" stroke="#d2d2d2" stroke-width="1.2"/><line x1="108" y1="62.400000000000006" x2="198" y2="62.400000000000006" stroke="#d2d2d2" stroke-width="1.2"/><line x1="108" y1="69.10000000000001" x2="198" y2="69.10000000000001" stroke="#d2d2d2" stroke-width="1.2"/><line x1="108" y1="75.80000000000001" x2="198" y2="75.80000000000001" stroke="#d2d2d2" stroke-width="1.2"/><line x1="108" y1="82.50000000000001" x2="198" y2="82.50000000000001" stroke="#d2d2d2" stroke-width="1.2"/><line x1="108" y1="89.20000000000002" x2="198" y2="89.20000000000002" stroke="#d2d2d2" stroke-width="1.2"/><line x1="108" y1="95.90000000000002" x2="198" y2="95.90000000000002" stroke="#d2d2d2" stroke-width="1.2"/><line x1="108" y1="102.60000000000002" x2="198" y2="102.60000000000002" stroke="#d2d2d2" stroke-width="1.2"/><line x1="108" y1="109.30000000000003" x2="198" y2="109.30000000000003" stroke="#d2d2d2" stroke-width="1.2"/><line x1="108" y1="116.00000000000003" x2="198" y2="116.00000000000003" stroke="#d2d2d2" stroke-width="1.2"/><line x1="108" y1="122.70000000000003" x2="198" y2="122.70000000000003" stroke="#d2d2d2" stroke-width="1.2"/><line x1="108" y1="129.40000000000003" x2="198" y2="129.40000000000003" stroke="#d2d2d2" stroke-width="1.2"/><line x1="108" y1="136.10000000000002" x2="198" y2="136.10000000000002" stroke="#d2d2d2" stroke-width="1.2"/><line x1="108" y1="142.8" x2="198" y2="142.8" stroke="#d2d2d2" stroke-width="1.2"/><line x1="108" y1="149.5" x2="198" y2="149.5" stroke="#d2d2d2" stroke-width="1.2"/><line x1="108" y1="156.2" x2="198" y2="156.2" stroke="#d2d2d2" stroke-width="1.2"/><line x1="108" y1="162.89999999999998" x2="198" y2="162.89999999999998" stroke="#d2d2d2" stroke-width="1.2"/><line x1="108" y1="169.59999999999997" x2="198" y2="169.59999999999997" stroke="#d2d2d2" stroke-width="1.2"/><line x1="108" y1="176.29999999999995" x2="198" y2="176.29999999999995" stroke="#d2d2d2" stroke-width="1.2"/><line x1="108" y1="182.99999999999994" x2="198" y2="182.99999999999994" stroke="#d2d2d2" stroke-width="1.2"/><line x1="108" y1="48" x2="108" y2="185" stroke="#bdbdbd" stroke-width="2"/><line x1="198" y1="48" x2="198" y2="185" stroke="#d8d8d8" stroke-width="2"/><line x1="157" y1="18" x2="157" y2="48" stroke="#777" stroke-width="5"/><path d="M140 22 l3 4 l3 -4 M168 22 l3 4 l3 -4" stroke="#aaa" stroke-width="2" fill="none"/><rect x="128" y="33" width="33" height="8" fill="#2a2a2a"/><rect x="144" y="48" width="26" height="6" fill="#1f1f1f"/><rect x="146" y="52" width="22" height="160" fill="url(#n3)"/><rect x="146" y="52" width="22" height="160" fill="#333" opacity=".55"/><rect x="146" y="52" width="4" height="160" fill="#222"/><rect x="164" y="52" width="4" height="160" fill="#333"/><rect x="151" y="52" width="13" height="12" fill="#888"/><rect x="152" y="70" width="10" height="4" fill="#666"/><rect x="152" y="81" width="10" height="4" fill="#666"/><rect x="152" y="92" width="10" height="4" fill="#666"/><rect x="152" y="103" width="10" height="4" fill="#666"/><rect x="152" y="114" width="10" height="4" fill="#666"/><rect x="152" y="125" width="10" height="4" fill="#666"/><rect x="152" y="136" width="10" height="4" fill="#666"/><rect x="152" y="147" width="10" height="4" fill="#666"/><rect x="152" y="158" width="10" height="4" fill="#666"/><rect x="152" y="169" width="10" height="4" fill="#666"/><rect x="152" y="180" width="10" height="4" fill="#666"/><rect x="152" y="191" width="10" height="4" fill="#666"/><rect x="152" y="202" width="10" height="4" fill="#666"/><rect x="128" y="64" width="56" height="7" fill="#1f1f1f"/><rect x="135" y="97" width="45" height="7" fill="#1f1f1f"/><rect x="132" y="130" width="52" height="7" fill="#1f1f1f"/><rect x="135" y="165" width="45" height="7" fill="#1f1f1f"/><path d="M141 207 h12 v8 h-12z M184 207 h12 v8 h-12z" fill="#222"/><path d="M115 188 l6 6 M195 188 l-3 6" stroke="#444" stroke-width="4"/><path d="M112 100 h8 M132 152 l5 3 -5 3z" stroke="#999" stroke-width="1.5" fill="none"/></g></symbol></defs></svg>
<div class="a" style="left:392px;top:242px;width:408px;height:297px;background:#edf0f4"></div>
<div class="a" style="left:396px;top:246px;width:400px;height:289px;background:#e5e9f0"></div>
<svg class="a" style="left:429px;top:256px;background:#fff" width="334" height="215"><use href="#thA1"/></svg>
<div class="a" style="left:400px;top:472px;width:392px;height:60px;background:#c5d0de"></div>
<div class="t" style="left:412px;top:488.80px;font-size:28px;color:#5b6678;letter-spacing:-0.6px;">Sample-1.pdf - 1</div>
<div class="a" style="left:848px;top:242px;width:408px;height:297px;background:#edf0f4"></div>
<div class="a" style="left:852px;top:246px;width:400px;height:289px;background:#e5e9f0"></div>
<svg class="a" style="left:885px;top:256px;background:#fff" width="334" height="215"><use href="#thB2"/></svg>
<div class="a" style="left:856px;top:472px;width:392px;height:60px;background:#c5d0de"></div>
<div class="t" style="left:868px;top:488.80px;font-size:28px;color:#5b6678;letter-spacing:-0.6px;">Sample-1.pdf - 2</div>
<div class="a" style="left:1304px;top:242px;width:408px;height:297px;background:#edf0f4"></div>
<div class="a" style="left:1308px;top:246px;width:400px;height:289px;background:#e5e9f0"></div>
<svg class="a" style="left:1341px;top:256px;background:#fff" width="334" height="215"><use href="#thC3"/></svg>
<div class="a" style="left:1312px;top:472px;width:392px;height:60px;background:#c5d0de"></div>
<div class="t" style="left:1324px;top:488.80px;font-size:28px;color:#5b6678;letter-spacing:-0.6px;">Sample-1.pdf - 3</div>
<div class="a" style="left:392px;top:588px;width:408px;height:297px;background:#f9fafb;border:4px solid #4b6080"></div>
<svg class="a" style="left:429px;top:602px;background:#fff" width="334" height="215"><use href="#thA4"/></svg>
<div class="a" style="left:400px;top:818px;width:392px;height:60px;background:#c5d0de"></div>
<div class="t" style="left:412px;top:834.80px;font-size:28px;color:#5b6678;letter-spacing:-0.6px;">Sample-1.pdf - 4</div>
<div class="a" style="left:848px;top:588px;width:408px;height:297px;background:#edf0f4"></div>
<div class="a" style="left:852px;top:592px;width:400px;height:289px;background:#e5e9f0"></div>
<svg class="a" style="left:885px;top:602px;background:#fff" width="334" height="215"><use href="#thB5"/></svg>
<div class="a" style="left:856px;top:818px;width:392px;height:60px;background:#c5d0de"></div>
<div class="t" style="left:868px;top:834.80px;font-size:28px;color:#5b6678;letter-spacing:-0.6px;">Sample-1.pdf - 5</div>
<div class="a" style="left:1304px;top:588px;width:408px;height:297px;background:#edf0f4"></div>
<div class="a" style="left:1308px;top:592px;width:400px;height:289px;background:#e5e9f0"></div>
<svg class="a" style="left:1341px;top:602px;background:#fff" width="334" height="215"><use href="#thC6"/></svg>
<div class="a" style="left:1312px;top:818px;width:392px;height:60px;background:#c5d0de"></div>
<div class="t" style="left:1324px;top:834.80px;font-size:28px;color:#5b6678;letter-spacing:-0.6px;">Sample-1.pdf - 6</div>
<div class="a" style="left:392px;top:934px;width:408px;height:297px;background:#edf0f4"></div>
<div class="a" style="left:396px;top:938px;width:400px;height:289px;background:#e5e9f0"></div>
<svg class="a" style="left:429px;top:948px;background:#fff" width="334" height="215"><use href="#thA7"/></svg>
<div class="a" style="left:400px;top:1164px;width:392px;height:60px;background:#c5d0de"></div>
<div class="t" style="left:412px;top:1180.80px;font-size:28px;color:#5b6678;letter-spacing:-0.6px;">Sample-1.pdf - 7</div>
<div class="a" style="left:848px;top:934px;width:408px;height:297px;background:#edf0f4"></div>
<div class="a" style="left:852px;top:938px;width:400px;height:289px;background:#e5e9f0"></div>
<svg class="a" style="left:885px;top:948px;background:#fff" width="334" height="215"><use href="#thB8"/></svg>
<div class="a" style="left:856px;top:1164px;width:392px;height:60px;background:#c5d0de"></div>
<div class="t" style="left:868px;top:1180.80px;font-size:28px;color:#5b6678;letter-spacing:-0.6px;">Sample-1.pdf - 8</div>
<div class="a" style="left:573px;top:332px;width:401px;height:1111px;background:#f9fafb;border:2px solid #c6cdd8;box-shadow:0 4px 10px rgba(40,50,80,.25)"></div>
<div class="t" style="left:667px;top:359.80px;font-size:28px;color:#2f3542;letter-spacing:-0.9px;">Open</div>
<div class="t" style="left:667px;top:419.80px;font-size:28px;color:#2f3542;letter-spacing:-0.9px;">Open with...</div>
<svg class="a" style="left:938px;top:418px" width="20" height="28" viewBox="0 0 20 28"><path d="M5 3 L15 14 L5 25" stroke="#5f6a7d" stroke-width="3.2" fill="none"/></svg>
<div class="t" style="left:667px;top:479.80px;font-size:28px;color:#2f3542;letter-spacing:-0.9px;">Open version...</div>
<div class="a" style="left:582px;top:523px;width:383px;height:2px;background:#c6cdd8"></div>
<div class="t" style="left:667px;top:541.80px;font-size:28px;color:#2f3542;letter-spacing:-0.9px;">Add PDFs</div>
<svg class="a" style="left:630px;top:542px" width="20" height="24" viewBox="0 0 20 24"><path d="M2 0 H12 L19 7 V22 Q19 24 17 24 H2 Q0 24 0 22 V2 Q0 0 2 0Z" fill="#2f3542"/><path d="M12 0 V7 H19" fill="#f9fafb" opacity=".0"/><path d="M13 1 L18 6 H13Z" fill="#f9fafb"/><path d="M11 12 L5 18 M5 13 V18 H10" stroke="#f9fafb" stroke-width="2.4" fill="none"/></svg>
<div class="t" style="left:667px;top:601.80px;font-size:28px;color:#2f3542;letter-spacing:-0.9px;">Replace...</div>
<div class="t" style="left:667px;top:661.80px;font-size:28px;color:#2f3542;letter-spacing:-0.9px;">Duplicate</div>
<div class="t" style="left:667px;top:721.80px;font-size:28px;color:#2f3542;letter-spacing:-0.9px;">Add version...</div>
<div class="a" style="left:582px;top:764px;width:383px;height:2px;background:#c6cdd8"></div>
<div class="a" style="left:588px;top:771px;width:371px;height:50px;background:#e5e9f0"></div>
<div class="t" style="left:667px;top:783.80px;font-size:28px;color:#2f3542;letter-spacing:-0.9px;">Rotate</div>
<svg class="a" style="left:938px;top:782px" width="20" height="28" viewBox="0 0 20 28"><path d="M5 3 L15 14 L5 25" stroke="#2f3542" stroke-width="3.2" fill="none"/></svg>
<div class="a" style="left:582px;top:827px;width:383px;height:2px;background:#c6cdd8"></div>
<div class="t" style="left:667px;top:845.80px;font-size:28px;color:#2f3542;letter-spacing:-0.9px;">Export PDFs</div>
<div class="a" style="left:582px;top:889px;width:383px;height:2px;background:#c6cdd8"></div>
<div class="t" style="left:667px;top:907.80px;font-size:28px;color:#2f3542;letter-spacing:-0.9px;">Delete</div>
<div class="t" style="left:667px;top:967.80px;font-size:28px;color:#2f3542;letter-spacing:-0.9px;">Delete version</div>
<div class="a" style="left:582px;top:1010px;width:383px;height:2px;background:#c6cdd8"></div>
<div class="t" style="left:667px;top:1029.80px;font-size:28px;color:#2f3542;letter-spacing:-0.9px;">View</div>
<svg class="a" style="left:938px;top:1028px" width="20" height="28" viewBox="0 0 20 28"><path d="M5 3 L15 14 L5 25" stroke="#5f6a7d" stroke-width="3.2" fill="none"/></svg>
<svg class="a" style="left:626px;top:1033px" width="26" height="18" viewBox="0 0 26 18"><path d="M13 0 C6 0 1.5 5 0 9 C1.5 13 6 18 13 18 C20 18 24.5 13 26 9 C24.5 5 20 0 13 0Z" fill="#2f3542"/><circle cx="13" cy="9" r="5.5" fill="#f9fafb"/><circle cx="13" cy="9" r="3" fill="#2f3542"/></svg>
<div class="t" style="left:667px;top:1089.80px;font-size:28px;color:#2f3542;letter-spacing:-0.9px;">Select all</div>
<svg class="a" style="left:629px;top:1091px" width="22" height="22" viewBox="0 0 22 22"><rect width="22" height="22" rx="2.5" fill="#2f3542"/><path d="M5 11 L9.5 15.5 L17 7" stroke="#f9fafb" stroke-width="2.6" fill="none"/></svg>
<div class="t" style="left:667px;top:1149.80px;font-size:28px;color:#2f3542;letter-spacing:-0.9px;">Sort</div>
<svg class="a" style="left:938px;top:1148px" width="20" height="28" viewBox="0 0 20 28"><path d="M5 3 L15 14 L5 25" stroke="#5f6a7d" stroke-width="3.2" fill="none"/></svg>
<svg class="a" style="left:627px;top:1150px" width="26" height="24" viewBox="0 0 26 24" fill="none" stroke="#2f3542" stroke-width="2.2"><path d="M5 1 V22 M1 18 L5 22.5 L9 18 M1 5 L5 1 L9 5"/><path d="M12 4 H25 M12 11 H22 M12 18 H17"/></svg>
<div class="a" style="left:582px;top:1193px;width:383px;height:2px;background:#c6cdd8"></div>
<div class="t" style="left:667px;top:1211.80px;font-size:28px;color:#2f3542;letter-spacing:-0.9px;">Batch rename pages</div>
<svg class="a" style="left:629px;top:1213px" width="22" height="22" viewBox="0 0 22 22"><rect width="22" height="22" rx="2.5" fill="#2f3542"/><path d="M5 17 L6 13 L13 6 L16 9 L9 16Z" fill="#f9fafb"/><path d="M5 18 H17" stroke="#f9fafb" stroke-width="1.8"/></svg>
<div class="t" style="left:667px;top:1271.80px;font-size:28px;color:#2f3542;letter-spacing:-0.9px;">Re-index pages</div>
<div class="t" style="left:667px;top:1331.80px;font-size:28px;color:#2f3542;letter-spacing:-0.9px;">Batch set unit</div>
<div class="t" style="left:667px;top:1391.80px;font-size:28px;color:#2f3542;letter-spacing:-0.9px;">Properties</div>
<div class="a" style="left:967px;top:767px;width:301px;height:137px;background:#f9fafb;border:2px solid #c6cdd8;box-shadow:0 4px 10px rgba(40,50,80,.25)"></div>
<div class="a" style="left:982px;top:781px;width:270px;height:50px;background:#e5e9f0"></div>
<div class="t" style="left:993px;top:793.80px;font-size:28px;color:#2f3542;letter-spacing:-0.8px;">Clockwise</div>
<div class="t" style="left:993px;top:853.80px;font-size:28px;color:#2f3542;letter-spacing:-0.5px;">Counter-clockwise</div>
<div class="a" style="left:4px;top:1528px;width:2161px;height:70px;background:linear-gradient(180deg,#e6e9ef 0%,#e2e5eb 40%,#d2d4d9 100%)"></div>
<div class="a" style="left:4px;top:1528px;width:2161px;height:2px;background:#c6cdd8"></div>
<div class="t" style="left:19px;top:1547.14px;font-size:27px;color:#2f3542;letter-spacing:-0.4px;">9 pages</div>
<svg class="a" style="left:2004px;top:1546px" width="28" height="32" viewBox="0 0 28 32" fill="none" stroke="#eca53a" stroke-width="3"><path d="M13 6 A10 10 0 0 1 22.7 21"/><path d="M15 26 A10 10 0 0 1 5.3 11"/><path d="M7.5 6 L14.5 1 V11Z" fill="#eca53a" stroke="none"/><path d="M20.5 26 L13.5 21 V31Z" fill="#eca53a" stroke="none"/></svg>
<svg class="a" style="left:2100px;top:1552px" width="24" height="20" viewBox="0 0 24 20"><path d="M2 10 L8.5 16.5 L21.5 3" stroke="#2f3542" stroke-width="3" fill="none"/></svg>
</div>
</body></html>
